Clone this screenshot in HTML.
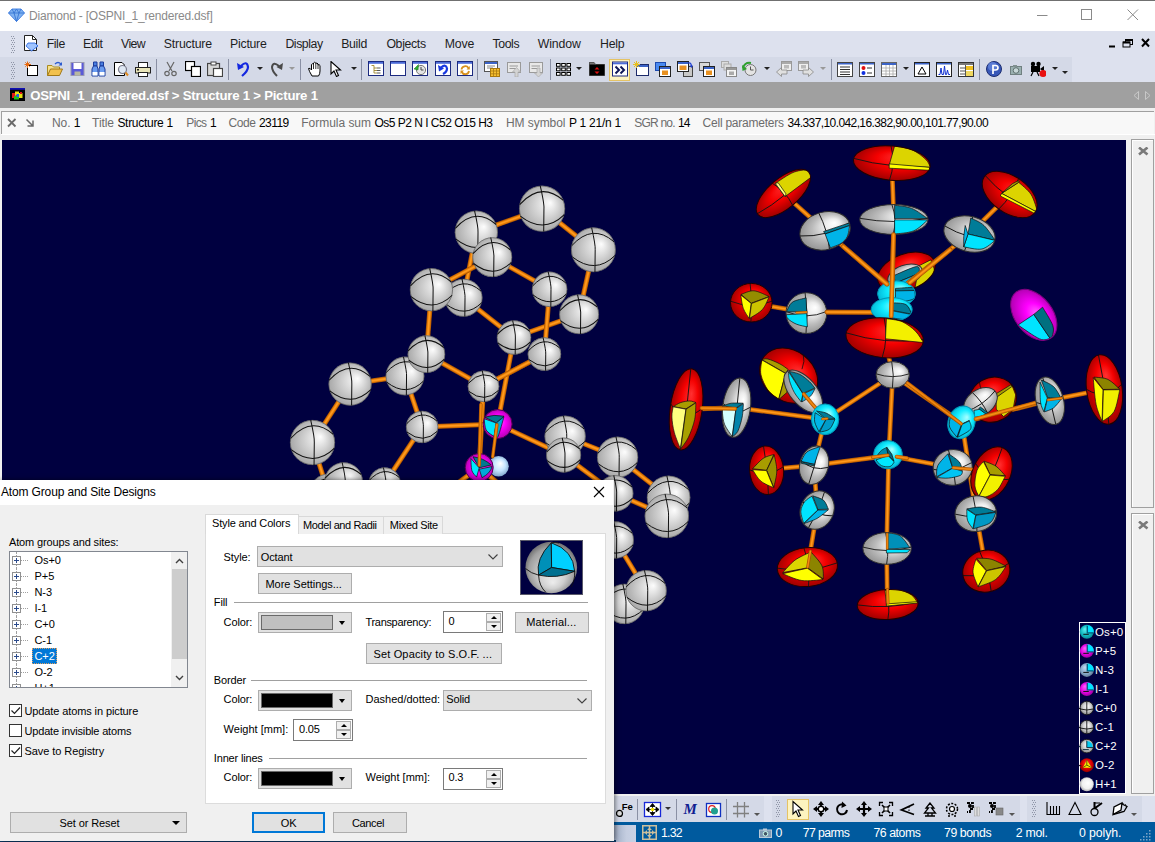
<!DOCTYPE html>
<html><head><meta charset="utf-8">
<style>
*{box-sizing:border-box;margin:0;padding:0}
html,body{width:1155px;height:842px;overflow:hidden;background:#f0f0f0;font-family:"Liberation Sans",sans-serif;font-size:12px;color:#000}
.abs{position:absolute}
#titlebar{left:0;top:0;width:1155px;height:31px;background:#fff;border-top:1px solid #707070}
#menubar{left:0;top:31px;width:1155px;height:51px;background:#dde1ee}
#tabbar{left:0;top:82px;width:1155px;height:26px;background:#a0a0a0}
#pic{left:2px;top:140px;width:1124px;height:654px;background:#000040;overflow:hidden}
#dlg{left:0;top:480px;width:614px;height:361px;background:#f0f0f0;overflow:hidden;box-shadow:1px 0 5px rgba(0,0,0,.55)}
</style></head><body>
<div id="titlebar" class="abs"></div>
<div id="menubar" class="abs"></div>
<div id="tabbar" class="abs"></div>
<svg style="position:absolute;left:8px;top:8px" width="17" height="14" viewBox="0 0 17 14"><path d="M4 1H13L16.5 5L8.5 13.5L0.5 5Z" fill="#7fb2f0"/><path d="M4 1L6 5L8.5 1L11 5L13 1M0.5 5H16.5M6 5L8.5 13.5L11 5" stroke="#2f6fd0" stroke-width=".8" fill="none"/><path d="M4 1H13L16.5 5L8.5 13.5L0.5 5Z" fill="none" stroke="#3b7be0" stroke-width=".9"/></svg>
<svg style="position:absolute;left:1036px;top:9px" width="12" height="12" viewBox="0 0 12 12"><path d="M1 6.5H11.5" stroke="#8a8a8a" stroke-width="1"/></svg>
<svg style="position:absolute;left:1081px;top:9px" width="12" height="12" viewBox="0 0 12 12"><rect x="0.5" y="0.5" width="10" height="10" fill="none" stroke="#8a8a8a" stroke-width="1"/></svg>
<svg style="position:absolute;left:1127px;top:9px" width="12" height="12" viewBox="0 0 12 12"><path d="M0.5 0.5L11 11M11 0.5L0.5 11" stroke="#8a8a8a" stroke-width="1"/></svg>
<div style="position:absolute;left:0px;top:57px;width:1072px;height:25px;background:#d4d9e7"></div>
<svg style="position:absolute;left:11px;top:36px" width="4" height="18" viewBox="0 0 4 18"><g fill="#8e94a6"><rect x="0" y="0" width="1" height="1"/><rect x="2" y="0" width="1" height="1"/><rect x="1" y="2" width="1" height="1"/><rect x="3" y="2" width="1" height="1"/><rect x="0" y="4" width="1" height="1"/><rect x="2" y="4" width="1" height="1"/><rect x="1" y="6" width="1" height="1"/><rect x="3" y="6" width="1" height="1"/><rect x="0" y="8" width="1" height="1"/><rect x="2" y="8" width="1" height="1"/><rect x="1" y="10" width="1" height="1"/><rect x="3" y="10" width="1" height="1"/><rect x="0" y="12" width="1" height="1"/><rect x="2" y="12" width="1" height="1"/><rect x="1" y="14" width="1" height="1"/><rect x="3" y="14" width="1" height="1"/><rect x="0" y="16" width="1" height="1"/><rect x="2" y="16" width="1" height="1"/></g></svg>
<svg style="position:absolute;left:11px;top:62px" width="4" height="18" viewBox="0 0 4 18"><g fill="#8e94a6"><rect x="0" y="0" width="1" height="1"/><rect x="2" y="0" width="1" height="1"/><rect x="1" y="2" width="1" height="1"/><rect x="3" y="2" width="1" height="1"/><rect x="0" y="4" width="1" height="1"/><rect x="2" y="4" width="1" height="1"/><rect x="1" y="6" width="1" height="1"/><rect x="3" y="6" width="1" height="1"/><rect x="0" y="8" width="1" height="1"/><rect x="2" y="8" width="1" height="1"/><rect x="1" y="10" width="1" height="1"/><rect x="3" y="10" width="1" height="1"/><rect x="0" y="12" width="1" height="1"/><rect x="2" y="12" width="1" height="1"/><rect x="1" y="14" width="1" height="1"/><rect x="3" y="14" width="1" height="1"/><rect x="0" y="16" width="1" height="1"/><rect x="2" y="16" width="1" height="1"/></g></svg>
<svg style="position:absolute;left:23px;top:34px" width="16" height="18" viewBox="0 0 16 18"><path d="M1.5 1.5H9.5L13.5 5.5V16.5H1.5Z" fill="#fff" stroke="#222" stroke-width="1"/><path d="M9.5 1.5V5.5H13.5" fill="none" stroke="#222"/><path d="M5 9H12L15 12L8.5 17L3 12Z" fill="#9fc4ff" stroke="#2060e0" stroke-width=".8"/></svg>
<svg style="position:absolute;left:1108px;top:36px" width="44" height="14" viewBox="0 0 44 14"><path d="M1 10.5H7" stroke="#000" stroke-width="2"/><rect x="17.5" y="3.5" width="7" height="5" fill="none" stroke="#000"/><path d="M17.5 4H24.5" stroke="#000" stroke-width="2"/><rect x="15" y="6" width="7" height="5" fill="#dde1ee" stroke="#000"/><path d="M15 6.5H22" stroke="#000" stroke-width="2"/><path d="M34 3L41 10.5M41 3L34 10.5" stroke="#000" stroke-width="2"/></svg>
<svg style="position:absolute;left:24px;top:61px" width="16" height="16" viewBox="0 0 16 16"><rect x="3.5" y="4.5" width="10" height="10" fill="#fff" stroke="#000"/><path d="M3.5 0.5V7M0.5 3.5H7M1.3 1.3L5.7 5.7M5.7 1.3L1.3 5.7" stroke="#e86a10" stroke-width="1"/></svg>
<svg style="position:absolute;left:47px;top:61px" width="16" height="16" viewBox="0 0 16 16"><path d="M0.5 14.5V4.5H5L6.5 6H12.5V8" fill="#f7e08a" stroke="#a88a20"/><path d="M0.5 14.5L3.5 8H15.5L12.5 14.5Z" fill="#f2c14e" stroke="#a07818"/><path d="M8 3Q11 0 14 3" stroke="#2c5cd0" fill="none" stroke-width="1.3"/><path d="M15 1V4.5H11.5Z" fill="#2c5cd0"/></svg>
<svg style="position:absolute;left:70px;top:61px" width="16" height="16" viewBox="0 0 16 16"><rect x="1" y="1.5" width="13" height="13" fill="#5a5ad8" stroke="#9a9ab0"/><rect x="3.5" y="2" width="8" height="6" fill="#fff"/><rect x="4.5" y="10.5" width="6" height="4" fill="#b8b8a0"/></svg>
<svg style="position:absolute;left:91px;top:61px" width="16" height="16" viewBox="0 0 16 16"><path d="M2.5 1H6V5H2.5ZM9 1H12.5V5H9Z" fill="#4a7ee0" stroke="#1c3c9c"/><path d="M1 15V8L2.5 5H6L7 8V15ZM8 15V8L9 5H12.5L14 8V15Z" fill="#6a9cf0" stroke="#1c3c9c"/><rect x="1.5" y="11" width="5" height="3.5" fill="#fff"/><rect x="8.5" y="11" width="5" height="3.5" fill="#fff"/></svg>
<svg style="position:absolute;left:113px;top:61px" width="16" height="16" viewBox="0 0 16 16"><path d="M1.5 1.5H9L11.5 4V14.5H1.5Z" fill="#fff" stroke="#000"/><circle cx="9.5" cy="8.5" r="4" fill="#dfe8f4" stroke="#7a7a8a" stroke-width="1.2"/><path d="M12.5 11.5L15 14.5" stroke="#e08a20" stroke-width="2"/></svg>
<svg style="position:absolute;left:135px;top:61px" width="16" height="16" viewBox="0 0 16 16"><rect x="3.5" y="1.5" width="9" height="5" fill="#fff" stroke="#222"/><rect x="0.5" y="6.5" width="15" height="5.5" fill="#e8e4b8" stroke="#222"/><rect x="3.5" y="11.5" width="9" height="4" fill="#fff" stroke="#222"/><rect x="2" y="8" width="2" height="1.5" fill="#222"/></svg>
<div style="position:absolute;left:156px;top:59px;width:1px;height:21px;background:#8a90a4"></div>
<svg style="position:absolute;left:163px;top:61px" width="16" height="16" viewBox="0 0 16 16"><path d="M4 1L9 10M11 1L6 10" stroke="#666" stroke-width="1.2" fill="none"/><circle cx="4" cy="12.5" r="2.2" fill="none" stroke="#666" stroke-width="1.2"/><circle cx="11" cy="12.5" r="2.2" fill="none" stroke="#666" stroke-width="1.2"/></svg>
<svg style="position:absolute;left:184.5px;top:61px" width="16" height="16" viewBox="0 0 16 16"><rect x="0.5" y="0.5" width="9" height="9" fill="#fff" stroke="#000" stroke-width="1.2"/><rect x="6.5" y="5.5" width="9" height="10" fill="#fff" stroke="#000" stroke-width="1.2"/></svg>
<svg style="position:absolute;left:207px;top:61px" width="16" height="16" viewBox="0 0 16 16"><rect x="0.5" y="2.5" width="12" height="12" fill="#d8d8d8" stroke="#444" stroke-width="1.2"/><rect x="4" y="1" width="5" height="3" fill="#fff" stroke="#444"/><rect x="6.5" y="7.5" width="9" height="8" fill="#fff" stroke="#444" stroke-width="1.2"/></svg>
<div style="position:absolute;left:228px;top:59px;width:1px;height:21px;background:#8a90a4"></div>
<svg style="position:absolute;left:236px;top:61px" width="16" height="16" viewBox="0 0 16 16"><path d="M5 5Q11 -1 12 6Q12 10 6 15" fill="none" stroke="#1428e0" stroke-width="2.2"/><path d="M1 2L2 9L8 6Z" fill="#1428e0"/></svg>
<div style="position:absolute;left:256.5px;top:67px;border:3px solid transparent;border-top:3.500px solid #222;border-bottom:none"></div>
<svg style="position:absolute;left:269px;top:61px" width="16" height="16" viewBox="0 0 16 16"><path d="M10 5Q4 0 3 6Q3 10 8 15" fill="none" stroke="#4a4a4a" stroke-width="2"/><path d="M14 2L13 9L7.5 6Z" fill="#4a4a4a"/></svg>
<div style="position:absolute;left:289px;top:67px;border:3px solid transparent;border-top:3.500px solid #999;border-bottom:none"></div>
<div style="position:absolute;left:300px;top:59px;width:1px;height:21px;background:#8a90a4"></div>
<svg style="position:absolute;left:308px;top:61px" width="16" height="16" viewBox="0 0 16 16"><path d="M4 15Q1 10 0.5 7.5Q2 6.5 3.5 9V3.5Q4.5 2 5.5 3.5V2Q6.5 0.5 7.8 2V2.5Q9 1.2 10 3V4Q11.2 3 12 4.5V10Q12 13 10.5 15Z" fill="#fff" stroke="#000" stroke-width="1"/><path d="M5.5 3.5V8M7.8 2.5V8M10 3.5V8" stroke="#000" stroke-width=".8"/></svg>
<svg style="position:absolute;left:330px;top:61px" width="16" height="16" viewBox="0 0 16 16"><path d="M1 0.5V13L4 10L6.5 15.5L8.5 14.5L6 9H10.5Z" fill="#fff" stroke="#000" stroke-width="1.1"/></svg>
<div style="position:absolute;left:351px;top:67px;border:3px solid transparent;border-top:3.500px solid #222;border-bottom:none"></div>
<div style="position:absolute;left:361px;top:59px;width:1px;height:21px;background:#8a90a4"></div>
<svg style="position:absolute;left:367.5px;top:61px" width="16" height="15" viewBox="0 0 16 15"><rect x=".5" y=".5" width="15" height="14" fill="#fff" stroke="#1c2a80"/><rect x="1" y="1" width="14" height="1.800" fill="#4c6cd8"/><path d="M3.500 4.500H6V12M6 7H9M6 9.500H9M6 12H9" stroke="#a08830" fill="none" stroke-width=".9"/><path d="M9 7H12.500M9 9.500H12.500M9 12H12.500" stroke="#444" stroke-width=".9"/></svg>
<svg style="position:absolute;left:390px;top:61px" width="16" height="15" viewBox="0 0 16 15"><rect x=".5" y=".5" width="15" height="14" fill="#fff" stroke="#1c2a80"/><rect x="1" y="1" width="14" height="1.800" fill="#4c6cd8"/></svg>
<svg style="position:absolute;left:412px;top:61px" width="16" height="15" viewBox="0 0 16 15"><rect x=".5" y=".5" width="15" height="14" fill="#fff" stroke="#1c2a80"/><rect x="1" y="1" width="14" height="1.800" fill="#4c6cd8"/><circle cx="9" cy="9" r="4.600" fill="#e4e4e4" stroke="#777"/><path d="M9 6V9H11.500" stroke="#444" fill="none"/><path d="M2 8L6.500 3.500L6 9Z" fill="#30b030" stroke="#187018" stroke-width=".5"/></svg>
<svg style="position:absolute;left:434.5px;top:61px" width="16" height="15" viewBox="0 0 16 15"><rect x=".5" y=".5" width="15" height="14" fill="#fff" stroke="#1c2a80"/><rect x="1" y="1" width="14" height="1.800" fill="#4c6cd8"/><path d="M6 6.500Q11 2.500 12 7.500Q12 11 8 13" fill="none" stroke="#1838e0" stroke-width="2.200"/><path d="M3 4L4 10.500L9 7.500Z" fill="#1838e0"/></svg>
<svg style="position:absolute;left:456.5px;top:61px" width="16" height="15" viewBox="0 0 16 15"><rect x=".5" y=".5" width="15" height="14" fill="#fff" stroke="#1c2a80"/><rect x="1" y="1" width="14" height="1.800" fill="#4c6cd8"/><path d="M4.500 8.500A3.800 3.800 0 0 1 11.500 7M12 10A3.800 3.800 0 0 1 4.800 11" fill="none" stroke="#d8901c" stroke-width="1.800"/><path d="M12.800 5V8.500H9.500ZM3.500 13V9.500H7Z" fill="#d8901c"/></svg>
<div style="position:absolute;left:477px;top:59px;width:1px;height:21px;background:#8a90a4"></div>
<svg style="position:absolute;left:483.5px;top:61px" width="16" height="16" viewBox="0 0 16 16"><rect x=".5" y=".5" width="13" height="10" fill="#fff" stroke="#555"/><rect x="1" y="1" width="12" height="2" fill="#3c64c8"/><path d="M3 5H11M3 7H9" stroke="#888"/><rect x="6.500" y="7.5" width="9" height="8" fill="#f8c030" stroke="#a87810"/><path d="M6.5 10H15.5M6.5 12.8H15.500M9.5 7.5V15.5M12.5 7.5V15.5" stroke="#a87810" stroke-width=".8"/></svg>
<svg style="position:absolute;left:505.5px;top:61px" width="16" height="16" viewBox="0 0 16 16"><rect x="1.500" y="1.500" width="13" height="10" fill="#e8e8e8" stroke="#9a9a9a"/><path d="M3.5 5H12M3.5 7.500H10" stroke="#9a9a9a"/><path d="M9 16V11H6.5L10.5 6.500L14.5 11H12V16Z" fill="#d4d4d4" stroke="#aaa" stroke-width=".7"/></svg>
<svg style="position:absolute;left:527.5px;top:61px" width="16" height="16" viewBox="0 0 16 16"><rect x="1.500" y="1.500" width="13" height="10" fill="#e8e8e8" stroke="#9a9a9a"/><path d="M3.5 5H12M3.5 7.500H10" stroke="#9a9a9a"/><path d="M9 7V12H6.500L10.5 16L14.5 12H12V7Z" fill="#d4d4d4" stroke="#aaa" stroke-width=".7"/></svg>
<div style="position:absolute;left:550px;top:59px;width:1px;height:21px;background:#8a90a4"></div>
<svg style="position:absolute;left:555.5px;top:61px" width="16" height="16" viewBox="0 0 16 16"><rect x="0.5" y="2.5" width="3.600" height="2.800" fill="#fff" stroke="#000" stroke-width="1"/><rect x="0.5" y="7" width="3.600" height="2.800" fill="#fff" stroke="#000" stroke-width="1"/><rect x="0.5" y="11.5" width="3.600" height="2.800" fill="#fff" stroke="#000" stroke-width="1"/><rect x="5.7" y="2.5" width="3.600" height="2.800" fill="#fff" stroke="#000" stroke-width="1"/><rect x="5.7" y="7" width="3.600" height="2.800" fill="#fff" stroke="#000" stroke-width="1"/><rect x="5.7" y="11.5" width="3.600" height="2.800" fill="#fff" stroke="#000" stroke-width="1"/><rect x="10.9" y="2.5" width="3.600" height="2.800" fill="#fff" stroke="#000" stroke-width="1"/><rect x="10.9" y="7" width="3.600" height="2.800" fill="#fff" stroke="#000" stroke-width="1"/><rect x="10.9" y="11.5" width="3.600" height="2.800" fill="#fff" stroke="#000" stroke-width="1"/></svg>
<div style="position:absolute;left:575.5px;top:67px;border:3px solid transparent;border-top:3.500px solid #222;border-bottom:none"></div>
<svg style="position:absolute;left:588.5px;top:61px" width="16" height="16" viewBox="0 0 16 16"><path d="M0.500 14.500V1.500H5L6.500 3.500H15.500V14.500Z" fill="#000" stroke="#333"/><path d="M0.5 1.5H5L6.5 3.500H0.500Z" fill="#777"/><path d="M8 6L5.500 8.500H10.500ZM8 13L5.500 10.500H10.500Z" fill="#e01010"/></svg>
<div style="position:absolute;left:608.5px;top:59px;width:21.5px;height:22px;background:#fdf3c0;border:1px solid #e5c365"></div>
<svg style="position:absolute;left:611.5px;top:61px" width="16" height="16" viewBox="0 0 16 16"><rect x=".5" y="1" width="15" height="14" fill="#fff" stroke="#1c2a80"/><rect x="1" y="1.500" width="14" height="1.800" fill="#4c6cd8"/><path d="M3.500 5.500L7 9L3.500 12.500M8.500 5.500L12 9L8.500 12.500" fill="none" stroke="#101858" stroke-width="2"/></svg>
<svg style="position:absolute;left:633px;top:61px" width="16" height="16" viewBox="0 0 16 16"><rect x="3.500" y="3.500" width="12" height="11" fill="#fff" stroke="#1c2a6a"/><rect x="4" y="4" width="11" height="2" fill="#3c64c8"/><path d="M3.500 0V7M0 3.500H7M1 1L6 6M6 1L1 6" stroke="#e8c020" stroke-width="1"/></svg>
<svg style="position:absolute;left:655px;top:61px" width="16" height="16" viewBox="0 0 16 16"><rect x=".5" y="1.500" width="10" height="8" fill="#4a8af0" stroke="#1c4ab0"/><rect x="4.500" y="5.500" width="11" height="10" fill="#fff" stroke="#222"/><rect x="5" y="6" width="10" height="2" fill="#3c64c8"/><rect x="7" y="9.500" width="6" height="4.500" fill="#e89020"/></svg>
<svg style="position:absolute;left:677px;top:61px" width="16" height="16" viewBox="0 0 16 16"><rect x="6.500" y="5.500" width="9" height="10" fill="#c8c8c8" stroke="#444"/><rect x=".5" y=".5" width="11" height="10" fill="#fff" stroke="#222"/><rect x="1" y="1" width="10" height="2" fill="#3c64c8"/><rect x="2.500" y="4.500" width="7" height="4.500" fill="#e89020"/><path d="M11 2Q14 1 14.500 5" stroke="#2040d0" fill="none" stroke-width="1.2"/><path d="M12.5 4.500H16L14.500 7Z" fill="#2040d0"/></svg>
<svg style="position:absolute;left:698.5px;top:61px" width="16" height="16" viewBox="0 0 16 16"><rect x=".5" y="1.500" width="10" height="8" fill="#d8d8d8" stroke="#555"/><rect x="4.500" y="5.500" width="11" height="10" fill="#fff" stroke="#222"/><rect x="5" y="6" width="10" height="2" fill="#3c64c8"/><rect x="7" y="9.500" width="6" height="4.500" fill="#e89020"/></svg>
<svg style="position:absolute;left:720.5px;top:61px" width="16" height="16" viewBox="0 0 16 16"><rect x=".5" y=".5" width="7" height="6" fill="#ddd" stroke="#aaa"/><rect x="3" y="3" width="7" height="6" fill="#ddd" stroke="#aaa"/><rect x="5.500" y="6.500" width="10" height="9" fill="#f4f4f4" stroke="#888"/><rect x="6" y="7" width="9" height="2" fill="#999"/><rect x="8" y="10.500" width="5" height="3.500" fill="#aaa"/></svg>
<svg style="position:absolute;left:742px;top:61px" width="16" height="16" viewBox="0 0 16 16"><circle cx="8.500" cy="9" r="5.500" fill="#e4e4e4" stroke="#777"/><path d="M8.500 5.500V9H11.500" stroke="#555" fill="none"/><path d="M1 7Q3 1 9 2" fill="none" stroke="#30a030" stroke-width="2"/><path d="M0 4L5 8L0.500 10Z" fill="#30a030"/></svg>
<div style="position:absolute;left:764px;top:67px;border:3px solid transparent;border-top:3.500px solid #222;border-bottom:none"></div>
<svg style="position:absolute;left:776px;top:61px" width="16" height="16" viewBox="0 0 16 16"><rect x="5.500" y=".5" width="10" height="9" fill="#eee" stroke="#999"/><rect x="6" y="1" width="9" height="2" fill="#aaa"/><rect x="8" y="4" width="5" height="3.500" fill="#bbb"/><path d="M0.500 11L5.500 6.500V9H11V13H5.500V15.500Z" fill="#e0e0e0" stroke="#888" stroke-width=".8"/></svg>
<svg style="position:absolute;left:798px;top:61px" width="16" height="16" viewBox="0 0 16 16"><rect x=".5" y=".5" width="10" height="9" fill="#eee" stroke="#999"/><rect x="1" y="1" width="9" height="2" fill="#aaa"/><rect x="3" y="4" width="5" height="3.500" fill="#bbb"/><path d="M15.500 11L10.500 6.500V9H5V13H10.500V15.500Z" fill="#e0e0e0" stroke="#888" stroke-width=".8"/></svg>
<div style="position:absolute;left:819.5px;top:67px;border:3px solid transparent;border-top:3.500px solid #999;border-bottom:none"></div>
<div style="position:absolute;left:831px;top:59px;width:1px;height:21px;background:#8a90a4"></div>
<svg style="position:absolute;left:836.5px;top:62px" width="16" height="15" viewBox="0 0 16 15"><rect x=".5" y=".5" width="15" height="14" fill="#fff" stroke="#444"/><rect x="1" y="1" width="14" height="1.500" fill="#3c64c8"/><path d="M3 5H13M3 7.500H13M3 10H13M3 12.500H13" stroke="#333"/></svg>
<svg style="position:absolute;left:859px;top:62px" width="16" height="15" viewBox="0 0 16 15"><rect x=".5" y=".5" width="15" height="14" fill="#fff" stroke="#444"/><rect x="1" y="1" width="14" height="1.500" fill="#3c64c8"/><circle cx="4.500" cy="6" r="2" fill="#e01010"/><circle cx="4.500" cy="11" r="2" fill="#1030e0"/><path d="M8 6H13M8 11H13" stroke="#333"/></svg>
<svg style="position:absolute;left:881px;top:62px" width="16" height="15" viewBox="0 0 16 15"><rect x=".5" y=".5" width="15" height="14" fill="#fff" stroke="#666"/><rect x="1" y="1" width="14" height="2" fill="#3c64c8"/><path d="M1 6H15M1 9H15M1 12H15M5 3V14M8.500 3V14M12 3V14" stroke="#aaa" stroke-width=".8"/></svg>
<div style="position:absolute;left:902.5px;top:67px;border:3px solid transparent;border-top:3.500px solid #222;border-bottom:none"></div>
<svg style="position:absolute;left:914px;top:62px" width="16" height="15" viewBox="0 0 16 15"><rect x=".5" y=".5" width="15" height="14" fill="#fff" stroke="#222"/><rect x="1" y="1" width="14" height="1.500" fill="#3c64c8"/><path d="M8 5L4 12H12Z" fill="none" stroke="#000"/></svg>
<svg style="position:absolute;left:936px;top:62px" width="16" height="15" viewBox="0 0 16 15"><rect x=".5" y=".5" width="15" height="14" fill="#fff" stroke="#222"/><rect x="1" y="1" width="14" height="1.500" fill="#3c64c8"/><path d="M2.500 12.500H4L5 6L6 12.500H7.500L8.500 4L9.500 12.500H10.500L11.500 8L12.500 12.500H14" fill="none" stroke="#1030d0"/></svg>
<svg style="position:absolute;left:957.5px;top:62px" width="16" height="15" viewBox="0 0 16 15"><rect x=".5" y=".5" width="15" height="14" fill="#fff" stroke="#333"/><rect x="1" y="1" width="14" height="2" fill="#777"/><rect x="8" y="4" width="7" height="4" fill="#f0c020"/><rect x="8" y="9" width="7" height="5" fill="#f0d860"/><path d="M2 6H7M2 9H7M2 12H7M7.500 3V14" stroke="#555"/></svg>
<div style="position:absolute;left:979px;top:59px;width:1px;height:21px;background:#8a90a4"></div>
<svg style="position:absolute;left:986px;top:61px" width="16" height="16" viewBox="0 0 16 16"><circle cx="8" cy="8" r="7.500" fill="#3858b8" stroke="#1c2c70"/><circle cx="6.500" cy="5.500" r="4.500" fill="#6a8ae0" opacity=".7"/><path d="M7 13V4.500H9.500Q12 4.500 12 6.800Q12 9 9.500 9H7" fill="none" stroke="#fff" stroke-width="1.700"/></svg>
<svg style="position:absolute;left:1010px;top:63px" width="16" height="16" viewBox="0 0 16 16"><rect x=".5" y="3.500" width="11" height="8" fill="#9ab0b0" stroke="#708080"/><circle cx="6" cy="7.500" r="2.800" fill="#c8d8d8" stroke="#607070"/><rect x="3" y="2" width="4" height="2" fill="#809090"/></svg>
<svg style="position:absolute;left:1029.5px;top:61px" width="16" height="16" viewBox="0 0 16 16"><circle cx="3" cy="3" r="2.200" fill="#000"/><circle cx="8.500" cy="3" r="2.200" fill="#000"/><rect x="1" y="5" width="9" height="6" fill="#000"/><path d="M10 8L14 5V11Z" fill="#000"/><path d="M3 11L1 15M7 11L9 15" stroke="#000" stroke-width="1.200"/><circle cx="13" cy="12.500" r="3.500" fill="#e81010"/></svg>
<div style="position:absolute;left:1051.5px;top:67px;border:3px solid transparent;border-top:3.500px solid #222;border-bottom:none"></div>
<div style="position:absolute;left:1061.5px;top:71px;border:3px solid transparent;border-top:3.500px solid #222;border-bottom:none"></div>
<svg style="position:absolute;left:10px;top:88px" width="15" height="13" viewBox="0 0 15 13"><rect x="0" y="0" width="15" height="13" fill="#000"/><rect x="0" y="0" width="15" height="1.800" fill="#1010b0"/><rect x="2" y="5" width="4" height="5" fill="#e01818"/><rect x="5" y="3.500" width="4" height="4" fill="#e8e010"/><rect x="8" y="5" width="4.500" height="5" fill="#e8e010"/><rect x="4" y="8" width="5" height="3.500" fill="#18c018"/><rect x="6.500" y="6" width="2.500" height="3" fill="#2060f0"/><rect x="10" y="4" width="2" height="2" fill="#e01818"/></svg>
<svg style="position:absolute;left:1133px;top:90px" width="18" height="12" viewBox="0 0 18 12"><path d="M5.500 1.500V9.500L1 5.500Z M12.500 1.500V9.500L17 5.500Z" fill="none" stroke="#c8c8c8" stroke-width="1"/></svg>
<div style="position:absolute;left:1px;top:111px;width:1153px;height:23px;background:#f8f8f8;border-top:1px solid #a0a0a0;border-left:1px solid #a0a0a0"></div>
<div style="position:absolute;left:1px;top:134px;width:1154px;height:1px;background:#fff"></div>
<svg style="position:absolute;left:7px;top:118px" width="28" height="10" viewBox="0 0 28 10"><path d="M1 1L8.500 8.500M8.500 1L1 8.500" stroke="#6a6a6a" stroke-width="1.800"/><path d="M19.500 1.500L25.500 7.500M26 2.500V8H20.500" fill="none" stroke="#6a6a6a" stroke-width="1.500"/></svg>
<div style="position:absolute;left:1126px;top:136px;width:29px;height:660px;background:#f0f0f0"></div>
<div style="position:absolute;left:1131px;top:139px;width:23px;height:369px;background:#f0f0f0;border:1px solid #a0a0a0;box-shadow:inset 1px 1px 0 #fff"></div>
<div style="position:absolute;left:1131px;top:513px;width:23px;height:281px;background:#f0f0f0;border:1px solid #a0a0a0;box-shadow:inset 1px 1px 0 #fff"></div>
<svg style="position:absolute;left:1138px;top:147px" width="11" height="9" viewBox="0 0 11 9"><path d="M1 0.500L9.500 7.500M9.500 0.500L1 7.500" stroke="#7a7a7a" stroke-width="2.600"/></svg>
<svg style="position:absolute;left:1138px;top:520.5px" width="11" height="9" viewBox="0 0 11 9"><path d="M1 0.500L9.500 7.500M9.500 0.500L1 7.500" stroke="#7a7a7a" stroke-width="2.600"/></svg>
<div style="position:absolute;left:0px;top:794px;width:1155px;height:2px;background:#f0f0f0"></div>
<div style="position:absolute;left:0px;top:796px;width:1155px;height:26px;background:#dde1ee"></div>
<div style="position:absolute;left:0px;top:796px;width:1142px;height:26px;background:#d4d9e7"></div>
<div style="position:absolute;left:0px;top:821.5px;width:1155px;height:20.5px;background:#005a9e"></div>
<div style="position:absolute;left:612px;top:825px;width:24px;height:17px;background:linear-gradient(90deg,#9aa8c0,#c4cde0 60%,#c9d1e4)"></div>
<svg style="position:absolute;left:642px;top:825px" width="16" height="16" viewBox="0 0 16 16"><rect x=".75" y=".75" width="13.5" height="13.5" fill="none" stroke="#cdbf9c" stroke-width="1.500"/><path d="M7.500 1V14M1 7.500H14" stroke="#cdbf9c" stroke-width="1.500"/><path d="M7.500 2.500L5 5H10ZM7.500 12.500L5 10H10ZM2.500 7.500L5 5V10ZM12.500 7.500L10 5V10Z" fill="#cdbf9c"/></svg>
<svg style="position:absolute;left:759px;top:828px" width="14" height="10" viewBox="0 0 14 10"><rect x=".5" y="2" width="12" height="7.500" fill="#7f9ab4" stroke="#b9c9d8"/><circle cx="6.500" cy="5.800" r="2.300" fill="#456" stroke="#cfe"/><rect x="4" y=".5" width="4" height="2" fill="#b9c9d8"/></svg>
<svg style="position:absolute;left:1140px;top:830px" width="12" height="11" viewBox="0 0 12 11"><g fill="#7fa6c8"><rect x="9" y="0" width="1.500" height="1.500"/><rect x="6" y="3" width="1.500" height="1.500"/><rect x="9" y="3" width="1.500" height="1.500"/><rect x="3" y="6" width="1.500" height="1.500"/><rect x="6" y="6" width="1.500" height="1.500"/><rect x="9" y="6" width="1.500" height="1.500"/><rect x="0" y="9" width="1.500" height="1.500"/><rect x="3" y="9" width="1.500" height="1.500"/><rect x="6" y="9" width="1.500" height="1.500"/><rect x="9" y="9" width="1.500" height="1.500"/></g></svg>
<span style="position:absolute;left:29.1px;top:9px;font-size:12px;line-height:14px;font-weight:normal;color:#8a8a8a;white-space:pre;letter-spacing:-0.207px">Diamond - [OSPNI_1_rendered.dsf]</span>
<span style="position:absolute;left:46.7px;top:36.5px;font-size:12.3px;line-height:14px;font-weight:normal;color:#1e1e1e;white-space:pre;letter-spacing:-0.409px">File</span>
<span style="position:absolute;left:82.9px;top:36.5px;font-size:12.3px;line-height:14px;font-weight:normal;color:#1e1e1e;white-space:pre;letter-spacing:-0.368px">Edit</span>
<span style="position:absolute;left:121.1px;top:36.5px;font-size:12.3px;line-height:14px;font-weight:normal;color:#1e1e1e;white-space:pre;letter-spacing:-0.613px">View</span>
<span style="position:absolute;left:163.8px;top:36.5px;font-size:12.3px;line-height:14px;font-weight:normal;color:#1e1e1e;white-space:pre;letter-spacing:-0.211px">Structure</span>
<span style="position:absolute;left:230.1px;top:36.5px;font-size:12.3px;line-height:14px;font-weight:normal;color:#1e1e1e;white-space:pre;letter-spacing:-0.264px">Picture</span>
<span style="position:absolute;left:285.4px;top:36.5px;font-size:12.3px;line-height:14px;font-weight:normal;color:#1e1e1e;white-space:pre;letter-spacing:-0.438px">Display</span>
<span style="position:absolute;left:341.2px;top:36.5px;font-size:12.3px;line-height:14px;font-weight:normal;color:#1e1e1e;white-space:pre;letter-spacing:-0.315px">Build</span>
<span style="position:absolute;left:386.4px;top:36.5px;font-size:12.3px;line-height:14px;font-weight:normal;color:#1e1e1e;white-space:pre;letter-spacing:-0.334px">Objects</span>
<span style="position:absolute;left:444.7px;top:36.5px;font-size:12.3px;line-height:14px;font-weight:normal;color:#1e1e1e;white-space:pre;letter-spacing:-0.126px">Move</span>
<span style="position:absolute;left:492.5px;top:36.5px;font-size:12.3px;line-height:14px;font-weight:normal;color:#1e1e1e;white-space:pre;letter-spacing:-0.405px">Tools</span>
<span style="position:absolute;left:537.7px;top:36.5px;font-size:12.3px;line-height:14px;font-weight:normal;color:#1e1e1e;white-space:pre;letter-spacing:-0.090px">Window</span>
<span style="position:absolute;left:600.1px;top:36.5px;font-size:12.3px;line-height:14px;font-weight:normal;color:#1e1e1e;white-space:pre;letter-spacing:-0.232px">Help</span>
<span style="position:absolute;left:30.2px;top:87.5px;font-size:13.2px;line-height:15px;font-weight:bold;color:#fff;white-space:pre;letter-spacing:-0.234px">OSPNI_1_rendered.dsf &gt; Structure 1 &gt; Picture 1</span>
<span style="position:absolute;left:52px;top:115.5px;font-size:12px;line-height:14px;font-weight:normal;color:#6c6c6c;white-space:pre;letter-spacing:-0.094px">No.</span>
<span style="position:absolute;left:73.8px;top:115.5px;font-size:12px;line-height:14px;font-weight:normal;color:#000;white-space:pre;letter-spacing:0.000px">1</span>
<span style="position:absolute;left:92.1px;top:115.5px;font-size:12px;line-height:14px;font-weight:normal;color:#6c6c6c;white-space:pre;letter-spacing:-0.084px">Title</span>
<span style="position:absolute;left:117.4px;top:115.5px;font-size:12px;line-height:14px;font-weight:normal;color:#000;white-space:pre;letter-spacing:-0.290px">Structure 1</span>
<span style="position:absolute;left:186.3px;top:115.5px;font-size:12px;line-height:14px;font-weight:normal;color:#6c6c6c;white-space:pre;letter-spacing:-0.657px">Pics</span>
<span style="position:absolute;left:209.9px;top:115.5px;font-size:12px;line-height:14px;font-weight:normal;color:#000;white-space:pre;letter-spacing:0.000px">1</span>
<span style="position:absolute;left:228.6px;top:115.5px;font-size:12px;line-height:14px;font-weight:normal;color:#6c6c6c;white-space:pre;letter-spacing:-0.429px">Code</span>
<span style="position:absolute;left:259px;top:115.5px;font-size:12px;line-height:14px;font-weight:normal;color:#000;white-space:pre;letter-spacing:-0.571px">23119</span>
<span style="position:absolute;left:301.3px;top:115.5px;font-size:12px;line-height:14px;font-weight:normal;color:#6c6c6c;white-space:pre;letter-spacing:-0.032px">Formula sum</span>
<span style="position:absolute;left:374.4px;top:115.5px;font-size:12px;line-height:14px;font-weight:normal;color:#000;white-space:pre;letter-spacing:-0.507px">Os5 P2 N I C52 O15 H3</span>
<span style="position:absolute;left:506px;top:115.5px;font-size:12px;line-height:14px;font-weight:normal;color:#6c6c6c;white-space:pre;letter-spacing:-0.064px">HM symbol</span>
<span style="position:absolute;left:569px;top:115.5px;font-size:12px;line-height:14px;font-weight:normal;color:#000;white-space:pre;letter-spacing:-0.256px">P 1 21/n 1</span>
<span style="position:absolute;left:634.3px;top:115.5px;font-size:12px;line-height:14px;font-weight:normal;color:#6c6c6c;white-space:pre;letter-spacing:-0.800px">SGR no.</span>
<span style="position:absolute;left:678px;top:115.5px;font-size:12px;line-height:14px;font-weight:normal;color:#000;white-space:pre;letter-spacing:-0.800px">14</span>
<span style="position:absolute;left:702.6px;top:115.5px;font-size:12px;line-height:14px;font-weight:normal;color:#6c6c6c;white-space:pre;letter-spacing:-0.236px">Cell parameters</span>
<span style="position:absolute;left:787.6px;top:115.5px;font-size:12px;line-height:14px;font-weight:normal;color:#000;white-space:pre;letter-spacing:-0.593px">34.337,10.042,16.382,90.00,101.77,90.00</span>
<span style="position:absolute;left:661px;top:825.5px;font-size:12.3px;line-height:14px;font-weight:normal;color:#fff;white-space:pre;letter-spacing:-0.800px">1.32</span>
<span style="position:absolute;left:775.4px;top:825.5px;font-size:12.3px;line-height:14px;font-weight:normal;color:#fff;white-space:pre;letter-spacing:0.000px">0</span>
<span style="position:absolute;left:802.8px;top:825.5px;font-size:12.3px;line-height:14px;font-weight:normal;color:#fff;white-space:pre;letter-spacing:-0.595px">77 parms</span>
<span style="position:absolute;left:873.4px;top:825.5px;font-size:12.3px;line-height:14px;font-weight:normal;color:#fff;white-space:pre;letter-spacing:-0.428px">76 atoms</span>
<span style="position:absolute;left:944px;top:825.5px;font-size:12.3px;line-height:14px;font-weight:normal;color:#fff;white-space:pre;letter-spacing:-0.430px">79 bonds</span>
<span style="position:absolute;left:1015.7px;top:825.5px;font-size:12.3px;line-height:14px;font-weight:normal;color:#fff;white-space:pre;letter-spacing:-0.260px">2 mol.</span>
<span style="position:absolute;left:1079px;top:825.5px;font-size:12.3px;line-height:14px;font-weight:normal;color:#fff;white-space:pre;letter-spacing:-0.097px">0 polyh.</span>
<div id="pic" class="abs">
<svg width="1124" height="654" viewBox="2 140 1124 654" style="position:absolute;left:0;top:0"><defs><radialGradient id="gGray" cx=".5" cy=".5" r=".6" fx=".68" fy=".37"><stop offset="0" stop-color="#fdfdfd"/><stop offset=".22" stop-color="#e8e8e8"/><stop offset=".55" stop-color="#c8c8c8"/><stop offset=".85" stop-color="#aaaaaa"/><stop offset="1" stop-color="#727272"/></radialGradient>
<radialGradient id="gGrayE" cx=".5" cy=".5" r=".62" fx=".72" fy=".36"><stop offset="0" stop-color="#fff"/><stop offset=".25" stop-color="#ececec"/><stop offset=".55" stop-color="#bcbcbc"/><stop offset=".85" stop-color="#969696"/><stop offset="1" stop-color="#7a7a7a"/></radialGradient>
<radialGradient id="gRed" cx=".5" cy=".5" r=".58" fx=".6" fy=".3"><stop offset="0" stop-color="#ff3030"/><stop offset=".45" stop-color="#f40000"/><stop offset="1" stop-color="#8c0000"/></radialGradient>
<radialGradient id="gCyan" cx=".5" cy=".5" r=".6" fx=".64" fy=".3"><stop offset="0" stop-color="#a8ffff"/><stop offset=".5" stop-color="#10ecff"/><stop offset="1" stop-color="#00a8cc"/></radialGradient>
<radialGradient id="gMag" cx=".5" cy=".5" r=".58" fx=".55" fy=".4"><stop offset="0" stop-color="#ff70ff"/><stop offset=".4" stop-color="#ff00ff"/><stop offset="1" stop-color="#a000a0"/></radialGradient>
<radialGradient id="gPale" cx=".5" cy=".5" r=".58" fx=".6" fy=".35"><stop offset="0" stop-color="#fff"/><stop offset=".5" stop-color="#c4e4ff"/><stop offset="1" stop-color="#7098c0"/></radialGradient><clipPath id="c1"><ellipse cx="497.6" cy="424.1" rx="14.5" ry="14.5" transform="rotate(0 497.6 424.1)"/></clipPath><clipPath id="c2"><ellipse cx="479.2" cy="467.5" rx="14" ry="14" transform="rotate(0 479.2 467.5)"/></clipPath><clipPath id="c3"><ellipse cx="906.4" cy="271.9" rx="30" ry="18" transform="rotate(-20 906.4 271.9)"/></clipPath><clipPath id="c4"><ellipse cx="905" cy="275.1" rx="18" ry="9.9" transform="rotate(-20 905 275.1)"/></clipPath><clipPath id="c5"><ellipse cx="891.8" cy="163.1" rx="38.5" ry="17.1" transform="rotate(5 891.8 163.1)"/></clipPath><clipPath id="c6"><ellipse cx="893.9" cy="219.5" rx="34.2" ry="15" transform="rotate(0 893.9 219.5)"/></clipPath><clipPath id="c7"><ellipse cx="783.4" cy="193.4" rx="33.1" ry="15" transform="rotate(-40 783.4 193.4)"/></clipPath><clipPath id="c8"><ellipse cx="825.1" cy="230.8" rx="25.6" ry="18.8" transform="rotate(-15 825.1 230.8)"/></clipPath><clipPath id="c9"><ellipse cx="969.5" cy="234" rx="26.1" ry="17.5" transform="rotate(15 969.5 234)"/></clipPath><clipPath id="c10"><ellipse cx="1009.7" cy="194.5" rx="31" ry="18.2" transform="rotate(35 1009.7 194.5)"/></clipPath><clipPath id="c11"><ellipse cx="1033.8" cy="314.9" rx="28.9" ry="18.7" transform="rotate(52 1033.8 314.9)"/></clipPath><clipPath id="c12"><ellipse cx="751.3" cy="302.7" rx="20.8" ry="19.3" transform="rotate(0 751.3 302.7)"/></clipPath><clipPath id="c13"><ellipse cx="806.4" cy="313.1" rx="20.4" ry="20.4" transform="rotate(0 806.4 313.1)"/></clipPath><clipPath id="c14"><ellipse cx="896.5" cy="293.7" rx="19" ry="12.9" transform="rotate(0 896.5 293.7)"/></clipPath><clipPath id="c15"><ellipse cx="891.7" cy="309.4" rx="20.5" ry="11.8" transform="rotate(0 891.7 309.4)"/></clipPath><clipPath id="c16"><ellipse cx="884.7" cy="337.8" rx="38.9" ry="19.9" transform="rotate(5 884.7 337.8)"/></clipPath><clipPath id="c17"><ellipse cx="892.7" cy="374.9" rx="16.7" ry="13.3" transform="rotate(0 892.7 374.9)"/></clipPath><clipPath id="c18"><ellipse cx="686.1" cy="409.3" rx="16" ry="41" transform="rotate(8 686.1 409.3)"/></clipPath><clipPath id="c19"><ellipse cx="736.5" cy="407.6" rx="13.9" ry="29.9" transform="rotate(8 736.5 407.6)"/></clipPath><clipPath id="c20"><ellipse cx="788.6" cy="375.6" rx="31.1" ry="25.2" transform="rotate(38 788.6 375.6)"/></clipPath><clipPath id="c21"><ellipse cx="803.2" cy="391.3" rx="25.5" ry="13.3" transform="rotate(50 803.2 391.3)"/></clipPath><clipPath id="c22"><ellipse cx="825.1" cy="419.3" rx="13.7" ry="15.4" transform="rotate(0 825.1 419.3)"/></clipPath><clipPath id="c23"><ellipse cx="766.6" cy="470.3" rx="17" ry="24.3" transform="rotate(-5 766.6 470.3)"/></clipPath><clipPath id="c24"><ellipse cx="814.1" cy="465.2" rx="14.3" ry="19.6" transform="rotate(15 814.1 465.2)"/></clipPath><clipPath id="c25"><ellipse cx="888" cy="454.7" rx="14.4" ry="14.1" transform="rotate(0 888 454.7)"/></clipPath><clipPath id="c26"><ellipse cx="992.7" cy="399.7" rx="24.3" ry="22" transform="rotate(-30 992.7 399.7)"/></clipPath><clipPath id="c27"><ellipse cx="980.5" cy="402.3" rx="18.4" ry="12.8" transform="rotate(-35 980.5 402.3)"/></clipPath><clipPath id="c28"><ellipse cx="961.5" cy="422.3" rx="13.4" ry="16.6" transform="rotate(18 961.5 422.3)"/></clipPath><clipPath id="c29"><ellipse cx="1049.8" cy="400.8" rx="13.7" ry="24.3" transform="rotate(-15 1049.8 400.8)"/></clipPath><clipPath id="c30"><ellipse cx="1104.4" cy="389.5" rx="17.8" ry="35" transform="rotate(-8 1104.4 389.5)"/></clipPath><clipPath id="c31"><ellipse cx="952.7" cy="467.4" rx="19.6" ry="17.8" transform="rotate(-10 952.7 467.4)"/></clipPath><clipPath id="c32"><ellipse cx="991.5" cy="473.3" rx="18.8" ry="28" transform="rotate(25 991.5 473.3)"/></clipPath><clipPath id="c33"><ellipse cx="817.1" cy="510.1" rx="16.6" ry="19.7" transform="rotate(25 817.1 510.1)"/></clipPath><clipPath id="c34"><ellipse cx="807.4" cy="567.1" rx="30.2" ry="19.4" transform="rotate(-5 807.4 567.1)"/></clipPath><clipPath id="c35"><ellipse cx="887.1" cy="548.4" rx="24.2" ry="15.9" transform="rotate(0 887.1 548.4)"/></clipPath><clipPath id="c36"><ellipse cx="887.7" cy="604.5" rx="30.5" ry="15" transform="rotate(-3 887.7 604.5)"/></clipPath><clipPath id="c37"><ellipse cx="975.8" cy="513.7" rx="20.8" ry="17.8" transform="rotate(-5 975.8 513.7)"/></clipPath><clipPath id="c38"><ellipse cx="986.3" cy="571.1" rx="23.8" ry="20.9" transform="rotate(-15 986.3 571.1)"/></clipPath></defs><line x1="476.3" y1="232.2" x2="542.1" y2="208.7" stroke="#a85400" stroke-width="5" stroke-linecap="round"/>
<line x1="476.3" y1="232.2" x2="542.1" y2="208.7" stroke="#e27808" stroke-width="3.7" stroke-linecap="round"/>
<line x1="476.3" y1="232.2" x2="542.1" y2="208.7" stroke="#ff9a1c" stroke-width="1.8" stroke-linecap="round"/>
<line x1="542.1" y1="208.7" x2="593.4" y2="249.8" stroke="#a85400" stroke-width="5" stroke-linecap="round"/>
<line x1="542.1" y1="208.7" x2="593.4" y2="249.8" stroke="#e27808" stroke-width="3.7" stroke-linecap="round"/>
<line x1="542.1" y1="208.7" x2="593.4" y2="249.8" stroke="#ff9a1c" stroke-width="1.8" stroke-linecap="round"/>
<line x1="593.4" y1="249.8" x2="579.1" y2="314.3" stroke="#a85400" stroke-width="5" stroke-linecap="round"/>
<line x1="593.4" y1="249.8" x2="579.1" y2="314.3" stroke="#e27808" stroke-width="3.7" stroke-linecap="round"/>
<line x1="593.4" y1="249.8" x2="579.1" y2="314.3" stroke="#ff9a1c" stroke-width="1.8" stroke-linecap="round"/>
<line x1="579.1" y1="314.3" x2="514" y2="337.5" stroke="#a85400" stroke-width="5" stroke-linecap="round"/>
<line x1="579.1" y1="314.3" x2="514" y2="337.5" stroke="#e27808" stroke-width="3.7" stroke-linecap="round"/>
<line x1="579.1" y1="314.3" x2="514" y2="337.5" stroke="#ff9a1c" stroke-width="1.8" stroke-linecap="round"/>
<line x1="492.3" y1="257.2" x2="549.6" y2="289.3" stroke="#a85400" stroke-width="5" stroke-linecap="round"/>
<line x1="492.3" y1="257.2" x2="549.6" y2="289.3" stroke="#e27808" stroke-width="3.7" stroke-linecap="round"/>
<line x1="492.3" y1="257.2" x2="549.6" y2="289.3" stroke="#ff9a1c" stroke-width="1.8" stroke-linecap="round"/>
<line x1="549.6" y1="289.3" x2="544.4" y2="354.1" stroke="#a85400" stroke-width="5" stroke-linecap="round"/>
<line x1="549.6" y1="289.3" x2="544.4" y2="354.1" stroke="#e27808" stroke-width="3.7" stroke-linecap="round"/>
<line x1="549.6" y1="289.3" x2="544.4" y2="354.1" stroke="#ff9a1c" stroke-width="1.8" stroke-linecap="round"/>
<line x1="476.3" y1="232.2" x2="463.5" y2="297.8" stroke="#a85400" stroke-width="5" stroke-linecap="round"/>
<line x1="476.3" y1="232.2" x2="463.5" y2="297.8" stroke="#e27808" stroke-width="3.7" stroke-linecap="round"/>
<line x1="476.3" y1="232.2" x2="463.5" y2="297.8" stroke="#ff9a1c" stroke-width="1.8" stroke-linecap="round"/>
<line x1="431.4" y1="289.7" x2="492.3" y2="257.2" stroke="#a85400" stroke-width="5" stroke-linecap="round"/>
<line x1="431.4" y1="289.7" x2="492.3" y2="257.2" stroke="#e27808" stroke-width="3.7" stroke-linecap="round"/>
<line x1="431.4" y1="289.7" x2="492.3" y2="257.2" stroke="#ff9a1c" stroke-width="1.8" stroke-linecap="round"/>
<line x1="431.4" y1="289.7" x2="426.4" y2="354.2" stroke="#a85400" stroke-width="5" stroke-linecap="round"/>
<line x1="431.4" y1="289.7" x2="426.4" y2="354.2" stroke="#e27808" stroke-width="3.7" stroke-linecap="round"/>
<line x1="431.4" y1="289.7" x2="426.4" y2="354.2" stroke="#ff9a1c" stroke-width="1.8" stroke-linecap="round"/>
<line x1="463.5" y1="297.8" x2="514" y2="337.5" stroke="#a85400" stroke-width="5" stroke-linecap="round"/>
<line x1="463.5" y1="297.8" x2="514" y2="337.5" stroke="#e27808" stroke-width="3.7" stroke-linecap="round"/>
<line x1="463.5" y1="297.8" x2="514" y2="337.5" stroke="#ff9a1c" stroke-width="1.8" stroke-linecap="round"/>
<line x1="426.4" y1="354.2" x2="483.5" y2="386.3" stroke="#a85400" stroke-width="5" stroke-linecap="round"/>
<line x1="426.4" y1="354.2" x2="483.5" y2="386.3" stroke="#e27808" stroke-width="3.7" stroke-linecap="round"/>
<line x1="426.4" y1="354.2" x2="483.5" y2="386.3" stroke="#ff9a1c" stroke-width="1.8" stroke-linecap="round"/>
<line x1="405" y1="376" x2="350.1" y2="384.1" stroke="#a85400" stroke-width="5" stroke-linecap="round"/>
<line x1="405" y1="376" x2="350.1" y2="384.1" stroke="#e27808" stroke-width="3.7" stroke-linecap="round"/>
<line x1="405" y1="376" x2="350.1" y2="384.1" stroke="#ff9a1c" stroke-width="1.8" stroke-linecap="round"/>
<line x1="405" y1="376" x2="422.1" y2="426.9" stroke="#a85400" stroke-width="5" stroke-linecap="round"/>
<line x1="405" y1="376" x2="422.1" y2="426.9" stroke="#e27808" stroke-width="3.7" stroke-linecap="round"/>
<line x1="405" y1="376" x2="422.1" y2="426.9" stroke="#ff9a1c" stroke-width="1.8" stroke-linecap="round"/>
<line x1="350.1" y1="384.1" x2="312.5" y2="442.5" stroke="#a85400" stroke-width="5" stroke-linecap="round"/>
<line x1="350.1" y1="384.1" x2="312.5" y2="442.5" stroke="#e27808" stroke-width="3.7" stroke-linecap="round"/>
<line x1="350.1" y1="384.1" x2="312.5" y2="442.5" stroke="#ff9a1c" stroke-width="1.8" stroke-linecap="round"/>
<line x1="312.5" y1="442.5" x2="328" y2="492" stroke="#a85400" stroke-width="5" stroke-linecap="round"/>
<line x1="312.5" y1="442.5" x2="328" y2="492" stroke="#e27808" stroke-width="3.7" stroke-linecap="round"/>
<line x1="312.5" y1="442.5" x2="328" y2="492" stroke="#ff9a1c" stroke-width="1.8" stroke-linecap="round"/>
<line x1="422.1" y1="426.9" x2="384.7" y2="483.5" stroke="#a85400" stroke-width="5" stroke-linecap="round"/>
<line x1="422.1" y1="426.9" x2="384.7" y2="483.5" stroke="#e27808" stroke-width="3.7" stroke-linecap="round"/>
<line x1="422.1" y1="426.9" x2="384.7" y2="483.5" stroke="#ff9a1c" stroke-width="1.8" stroke-linecap="round"/>
<line x1="483.5" y1="386.3" x2="544.4" y2="354.1" stroke="#a85400" stroke-width="5" stroke-linecap="round"/>
<line x1="483.5" y1="386.3" x2="544.4" y2="354.1" stroke="#e27808" stroke-width="3.7" stroke-linecap="round"/>
<line x1="483.5" y1="386.3" x2="544.4" y2="354.1" stroke="#ff9a1c" stroke-width="1.8" stroke-linecap="round"/>
<line x1="514" y1="337.5" x2="497.6" y2="424.1" stroke="#a85400" stroke-width="5" stroke-linecap="round"/>
<line x1="514" y1="337.5" x2="497.6" y2="424.1" stroke="#e27808" stroke-width="3.7" stroke-linecap="round"/>
<line x1="514" y1="337.5" x2="497.6" y2="424.1" stroke="#ff9a1c" stroke-width="1.8" stroke-linecap="round"/>
<line x1="544.4" y1="354.1" x2="483.5" y2="386.3" stroke="#a85400" stroke-width="5" stroke-linecap="round"/>
<line x1="544.4" y1="354.1" x2="483.5" y2="386.3" stroke="#e27808" stroke-width="3.7" stroke-linecap="round"/>
<line x1="544.4" y1="354.1" x2="483.5" y2="386.3" stroke="#ff9a1c" stroke-width="1.8" stroke-linecap="round"/>
<line x1="483.5" y1="386.3" x2="479.2" y2="467.5" stroke="#a85400" stroke-width="5" stroke-linecap="round"/>
<line x1="483.5" y1="386.3" x2="479.2" y2="467.5" stroke="#e27808" stroke-width="3.7" stroke-linecap="round"/>
<line x1="483.5" y1="386.3" x2="479.2" y2="467.5" stroke="#ff9a1c" stroke-width="1.8" stroke-linecap="round"/>
<line x1="422.1" y1="426.9" x2="497.6" y2="424.1" stroke="#a85400" stroke-width="5" stroke-linecap="round"/>
<line x1="422.1" y1="426.9" x2="497.6" y2="424.1" stroke="#e27808" stroke-width="3.7" stroke-linecap="round"/>
<line x1="422.1" y1="426.9" x2="497.6" y2="424.1" stroke="#ff9a1c" stroke-width="1.8" stroke-linecap="round"/>
<line x1="497.6" y1="424.1" x2="563.6" y2="455.1" stroke="#a85400" stroke-width="5" stroke-linecap="round"/>
<line x1="497.6" y1="424.1" x2="563.6" y2="455.1" stroke="#e27808" stroke-width="3.7" stroke-linecap="round"/>
<line x1="497.6" y1="424.1" x2="563.6" y2="455.1" stroke="#ff9a1c" stroke-width="1.8" stroke-linecap="round"/>
<line x1="565.1" y1="436.2" x2="617.6" y2="457.2" stroke="#a85400" stroke-width="5" stroke-linecap="round"/>
<line x1="565.1" y1="436.2" x2="617.6" y2="457.2" stroke="#e27808" stroke-width="3.7" stroke-linecap="round"/>
<line x1="565.1" y1="436.2" x2="617.6" y2="457.2" stroke="#ff9a1c" stroke-width="1.8" stroke-linecap="round"/>
<line x1="563.6" y1="455.1" x2="615.2" y2="493.4" stroke="#a85400" stroke-width="5" stroke-linecap="round"/>
<line x1="563.6" y1="455.1" x2="615.2" y2="493.4" stroke="#e27808" stroke-width="3.7" stroke-linecap="round"/>
<line x1="563.6" y1="455.1" x2="615.2" y2="493.4" stroke="#ff9a1c" stroke-width="1.8" stroke-linecap="round"/>
<line x1="617.6" y1="457.2" x2="668.6" y2="497.4" stroke="#a85400" stroke-width="5" stroke-linecap="round"/>
<line x1="617.6" y1="457.2" x2="668.6" y2="497.4" stroke="#e27808" stroke-width="3.7" stroke-linecap="round"/>
<line x1="617.6" y1="457.2" x2="668.6" y2="497.4" stroke="#ff9a1c" stroke-width="1.8" stroke-linecap="round"/>
<line x1="615.2" y1="493.4" x2="666.8" y2="515.9" stroke="#a85400" stroke-width="5" stroke-linecap="round"/>
<line x1="615.2" y1="493.4" x2="666.8" y2="515.9" stroke="#e27808" stroke-width="3.7" stroke-linecap="round"/>
<line x1="615.2" y1="493.4" x2="666.8" y2="515.9" stroke="#ff9a1c" stroke-width="1.8" stroke-linecap="round"/>
<line x1="615.2" y1="540" x2="646.1" y2="590.7" stroke="#a85400" stroke-width="5" stroke-linecap="round"/>
<line x1="615.2" y1="540" x2="646.1" y2="590.7" stroke="#e27808" stroke-width="3.7" stroke-linecap="round"/>
<line x1="615.2" y1="540" x2="646.1" y2="590.7" stroke="#ff9a1c" stroke-width="1.8" stroke-linecap="round"/>
<line x1="479.2" y1="467.5" x2="455" y2="485" stroke="#a85400" stroke-width="5" stroke-linecap="round"/>
<line x1="479.2" y1="467.5" x2="455" y2="485" stroke="#e27808" stroke-width="3.7" stroke-linecap="round"/>
<line x1="479.2" y1="467.5" x2="455" y2="485" stroke="#ff9a1c" stroke-width="1.8" stroke-linecap="round"/>
<line x1="479.2" y1="467.5" x2="500" y2="485" stroke="#a85400" stroke-width="5" stroke-linecap="round"/>
<line x1="479.2" y1="467.5" x2="500" y2="485" stroke="#e27808" stroke-width="3.7" stroke-linecap="round"/>
<line x1="479.2" y1="467.5" x2="500" y2="485" stroke="#ff9a1c" stroke-width="1.8" stroke-linecap="round"/>
<g transform="translate(476.3 232.2) scale(21.4)"><circle r="1" fill="url(#gGray)"/><g fill="none" stroke="#101010" stroke-width="0.047"><circle r="0.99" stroke="#5a5a5a" stroke-width="0.033"/><path d="M-0.08 -1Q0.1 -0.2 0.08 0L0.07 1"/><path d="M-0.98 -0.18Q-0.05 -1.21 0.93 -0.36"/><path d="M-0.95 0.32Q0.08 1.13 0.97 0.26"/></g></g>
<g transform="translate(542.1 208.7) scale(22.9)"><circle r="1" fill="url(#gGray)"/><g fill="none" stroke="#101010" stroke-width="0.044"><circle r="0.99" stroke="#5a5a5a" stroke-width="0.031"/><path d="M-0.08 -1Q0.1 -0.2 0.08 0L0.07 1"/><path d="M-0.98 -0.18Q-0.05 -1.21 0.93 -0.36"/><path d="M-0.95 0.32Q0.08 1.13 0.97 0.26"/></g></g>
<g transform="translate(593.4 249.8) scale(22.2)"><circle r="1" fill="url(#gGray)"/><g fill="none" stroke="#101010" stroke-width="0.045"><circle r="0.99" stroke="#5a5a5a" stroke-width="0.032"/><path d="M-0.08 -1Q0.1 -0.2 0.08 0L0.07 1"/><path d="M-0.98 -0.18Q-0.05 -1.21 0.93 -0.36"/><path d="M-0.95 0.32Q0.08 1.13 0.97 0.26"/></g></g>
<g transform="translate(492.3 257.2) scale(19.7)"><circle r="1" fill="url(#gGray)"/><g fill="none" stroke="#101010" stroke-width="0.051"><circle r="0.99" stroke="#5a5a5a" stroke-width="0.036"/><path d="M-0.08 -1Q0.1 -0.2 0.08 0L0.07 1"/><path d="M-0.98 -0.18Q-0.05 -1.21 0.93 -0.36"/><path d="M-0.95 0.32Q0.08 1.13 0.97 0.26"/></g></g>
<g transform="translate(463.5 297.8) scale(18.8)"><circle r="1" fill="url(#gGray)"/><g fill="none" stroke="#101010" stroke-width="0.053"><circle r="0.99" stroke="#5a5a5a" stroke-width="0.037"/><path d="M-0.08 -1Q0.1 -0.2 0.08 0L0.07 1"/><path d="M-0.98 -0.18Q-0.05 -1.21 0.93 -0.36"/><path d="M-0.95 0.32Q0.08 1.13 0.97 0.26"/></g></g>
<g transform="translate(431.4 289.7) scale(21.4)"><circle r="1" fill="url(#gGray)"/><g fill="none" stroke="#101010" stroke-width="0.047"><circle r="0.99" stroke="#5a5a5a" stroke-width="0.033"/><path d="M-0.08 -1Q0.1 -0.2 0.08 0L0.07 1"/><path d="M-0.98 -0.18Q-0.05 -1.21 0.93 -0.36"/><path d="M-0.95 0.32Q0.08 1.13 0.97 0.26"/></g></g>
<g transform="translate(549.6 289.3) scale(17.5)"><circle r="1" fill="url(#gGray)"/><g fill="none" stroke="#101010" stroke-width="0.057"><circle r="0.99" stroke="#5a5a5a" stroke-width="0.040"/><path d="M-0.08 -1Q0.1 -0.2 0.08 0L0.07 1"/><path d="M-0.98 -0.18Q-0.05 -1.21 0.93 -0.36"/><path d="M-0.95 0.32Q0.08 1.13 0.97 0.26"/></g></g>
<g transform="translate(579.1 314.3) scale(19.7)"><circle r="1" fill="url(#gGray)"/><g fill="none" stroke="#101010" stroke-width="0.051"><circle r="0.99" stroke="#5a5a5a" stroke-width="0.036"/><path d="M-0.08 -1Q0.1 -0.2 0.08 0L0.07 1"/><path d="M-0.98 -0.18Q-0.05 -1.21 0.93 -0.36"/><path d="M-0.95 0.32Q0.08 1.13 0.97 0.26"/></g></g>
<g transform="translate(544.4 354.1) scale(16.6)"><circle r="1" fill="url(#gGray)"/><g fill="none" stroke="#101010" stroke-width="0.060"><circle r="0.99" stroke="#5a5a5a" stroke-width="0.042"/><path d="M-0.08 -1Q0.1 -0.2 0.08 0L0.07 1"/><path d="M-0.98 -0.18Q-0.05 -1.21 0.93 -0.36"/><path d="M-0.95 0.32Q0.08 1.13 0.97 0.26"/></g></g>
<g transform="translate(514 337.5) scale(17)"><circle r="1" fill="url(#gGray)"/><g fill="none" stroke="#101010" stroke-width="0.059"><circle r="0.99" stroke="#5a5a5a" stroke-width="0.041"/><path d="M-0.08 -1Q0.1 -0.2 0.08 0L0.07 1"/><path d="M-0.98 -0.18Q-0.05 -1.21 0.93 -0.36"/><path d="M-0.95 0.32Q0.08 1.13 0.97 0.26"/></g></g>
<g transform="translate(405 376) scale(19.2)"><circle r="1" fill="url(#gGray)"/><g fill="none" stroke="#101010" stroke-width="0.052"><circle r="0.99" stroke="#5a5a5a" stroke-width="0.036"/><path d="M-0.08 -1Q0.1 -0.2 0.08 0L0.07 1"/><path d="M-0.98 -0.18Q-0.05 -1.21 0.93 -0.36"/><path d="M-0.95 0.32Q0.08 1.13 0.97 0.26"/></g></g>
<g transform="translate(426.4 354.2) scale(18.6)"><circle r="1" fill="url(#gGray)"/><g fill="none" stroke="#101010" stroke-width="0.054"><circle r="0.99" stroke="#5a5a5a" stroke-width="0.038"/><path d="M-0.08 -1Q0.1 -0.2 0.08 0L0.07 1"/><path d="M-0.98 -0.18Q-0.05 -1.21 0.93 -0.36"/><path d="M-0.95 0.32Q0.08 1.13 0.97 0.26"/></g></g>
<g transform="translate(350.1 384.1) scale(21.4)"><circle r="1" fill="url(#gGray)"/><g fill="none" stroke="#101010" stroke-width="0.047"><circle r="0.99" stroke="#5a5a5a" stroke-width="0.033"/><path d="M-0.08 -1Q0.1 -0.2 0.08 0L0.07 1"/><path d="M-0.98 -0.18Q-0.05 -1.21 0.93 -0.36"/><path d="M-0.95 0.32Q0.08 1.13 0.97 0.26"/></g></g>
<g transform="translate(483.5 386.3) scale(15.6)"><circle r="1" fill="url(#gGray)"/><g fill="none" stroke="#101010" stroke-width="0.064"><circle r="0.99" stroke="#5a5a5a" stroke-width="0.045"/><path d="M-0.08 -1Q0.1 -0.2 0.08 0L0.07 1"/><path d="M-0.98 -0.18Q-0.05 -1.21 0.93 -0.36"/><path d="M-0.95 0.32Q0.08 1.13 0.97 0.26"/></g></g>
<g transform="translate(422.1 426.9) scale(16)"><circle r="1" fill="url(#gGray)"/><g fill="none" stroke="#101010" stroke-width="0.062"><circle r="0.99" stroke="#5a5a5a" stroke-width="0.044"/><path d="M-0.08 -1Q0.1 -0.2 0.08 0L0.07 1"/><path d="M-0.98 -0.18Q-0.05 -1.21 0.93 -0.36"/><path d="M-0.95 0.32Q0.08 1.13 0.97 0.26"/></g></g>
<g transform="translate(312.5 442.5) scale(22.4)"><circle r="1" fill="url(#gGray)"/><g fill="none" stroke="#101010" stroke-width="0.045"><circle r="0.99" stroke="#5a5a5a" stroke-width="0.031"/><path d="M-0.08 -1Q0.1 -0.2 0.08 0L0.07 1"/><path d="M-0.98 -0.18Q-0.05 -1.21 0.93 -0.36"/><path d="M-0.95 0.32Q0.08 1.13 0.97 0.26"/></g></g>
<g transform="translate(328 492) scale(18)"><circle r="1" fill="url(#gGray)"/><g fill="none" stroke="#101010" stroke-width="0.056"><circle r="0.99" stroke="#5a5a5a" stroke-width="0.039"/><path d="M-0.08 -1Q0.1 -0.2 0.08 0L0.07 1"/><path d="M-0.98 -0.18Q-0.05 -1.21 0.93 -0.36"/><path d="M-0.95 0.32Q0.08 1.13 0.97 0.26"/></g></g>
<g transform="translate(343.7 481.5) scale(19)"><circle r="1" fill="url(#gGray)"/><g fill="none" stroke="#101010" stroke-width="0.053"><circle r="0.99" stroke="#5a5a5a" stroke-width="0.037"/><path d="M-0.08 -1Q0.1 -0.2 0.08 0L0.07 1"/><path d="M-0.98 -0.18Q-0.05 -1.21 0.93 -0.36"/><path d="M-0.95 0.32Q0.08 1.13 0.97 0.26"/></g></g>
<g transform="translate(384.7 483.5) scale(16)"><circle r="1" fill="url(#gGray)"/><g fill="none" stroke="#101010" stroke-width="0.062"><circle r="0.99" stroke="#5a5a5a" stroke-width="0.044"/><path d="M-0.08 -1Q0.1 -0.2 0.08 0L0.07 1"/><path d="M-0.98 -0.18Q-0.05 -1.21 0.93 -0.36"/><path d="M-0.95 0.32Q0.08 1.13 0.97 0.26"/></g></g>
<g transform="translate(498.5 466.3) scale(10.3)"><circle r="1" fill="url(#gPale)"/></g>
<ellipse cx="497.6" cy="424.1" rx="14.5" ry="14.5" transform="rotate(0 497.6 424.1)" fill="url(#gMag)"/><g clip-path="url(#c1)"><path d="M496.3 423 L484.7 417.2 Q493.6 414.1 504 416.2Z" fill="#007890" stroke="#101010" stroke-width="0.7" stroke-linejoin="round"/><path d="M496.3 423 L494.1 436.5 C492.8 435.4 487.9 433 486.2 430.1 C484.6 427.1 484.5 420.6 484.1 418.7Z" fill="#00e8ff" stroke="#101010" stroke-width="0.7" stroke-linejoin="round"/><path d="M496.3 423 L504 416.6 C503 419.9 499.6 433.2 498 436.5 C496.4 439.8 494.8 436.5 494.1 436.5Z" fill="#00a8d8" stroke="#101010" stroke-width="0.7" stroke-linejoin="round"/></g><ellipse cx="497.6" cy="424.1" rx="14.5" ry="14.5" transform="rotate(0 497.6 424.1)" fill="none" stroke="#500050" stroke-width="1"/>
<ellipse cx="479.2" cy="467.5" rx="14" ry="14" transform="rotate(0 479.2 467.5)" fill="url(#gMag)"/><g clip-path="url(#c2)"><path d="M479.2 467.9 L473 456.8 Q483.3 457.9 491.2 464.9Z" fill="#007890" stroke="#101010" stroke-width="0.7" stroke-linejoin="round"/><path d="M479.2 467.9 L476.6 477.1 C475.8 476 472.9 473.8 471.9 470.7 C471 467.6 471 460.5 470.9 458.5Z" fill="#00e8ff" stroke="#101010" stroke-width="0.7" stroke-linejoin="round"/><path d="M479.2 469.2 L492 466.6 Q490.3 473.4 482 477.7Z" fill="#00a8d8" stroke="#101010" stroke-width="0.7" stroke-linejoin="round"/></g><ellipse cx="479.2" cy="467.5" rx="14" ry="14" transform="rotate(0 479.2 467.5)" fill="none" stroke="#500050" stroke-width="1"/>
<line x1="480.9" y1="404.4" x2="479.2" y2="465.3" stroke="#a85400" stroke-width="3.4" stroke-linecap="round"/>
<line x1="480.9" y1="404.4" x2="479.2" y2="465.3" stroke="#e27808" stroke-width="2.1" stroke-linecap="round"/>
<line x1="480.9" y1="404.4" x2="479.2" y2="465.3" stroke="#ff9a1c" stroke-width="0.6" stroke-linecap="round"/>
<line x1="496.9" y1="424.7" x2="492.7" y2="456.8" stroke="#a85400" stroke-width="3.4" stroke-linecap="round"/>
<line x1="496.9" y1="424.7" x2="492.7" y2="456.8" stroke="#e27808" stroke-width="2.1" stroke-linecap="round"/>
<line x1="496.9" y1="424.7" x2="492.7" y2="456.8" stroke="#ff9a1c" stroke-width="0.6" stroke-linecap="round"/>
<g transform="translate(565.1 436.2) scale(20.4)"><circle r="1" fill="url(#gGray)"/><g fill="none" stroke="#101010" stroke-width="0.049"><circle r="0.99" stroke="#5a5a5a" stroke-width="0.034"/><path d="M-0.08 -1Q0.1 -0.2 0.08 0L0.07 1"/><path d="M-0.98 -0.18Q-0.05 -1.21 0.93 -0.36"/><path d="M-0.95 0.32Q0.08 1.13 0.97 0.26"/></g></g>
<g transform="translate(617.6 457.2) scale(20.4)"><circle r="1" fill="url(#gGray)"/><g fill="none" stroke="#101010" stroke-width="0.049"><circle r="0.99" stroke="#5a5a5a" stroke-width="0.034"/><path d="M-0.08 -1Q0.1 -0.2 0.08 0L0.07 1"/><path d="M-0.98 -0.18Q-0.05 -1.21 0.93 -0.36"/><path d="M-0.95 0.32Q0.08 1.13 0.97 0.26"/></g></g>
<g transform="translate(563.6 455.1) scale(17.3)"><circle r="1" fill="url(#gGray)"/><g fill="none" stroke="#101010" stroke-width="0.058"><circle r="0.99" stroke="#5a5a5a" stroke-width="0.040"/><path d="M-0.08 -1Q0.1 -0.2 0.08 0L0.07 1"/><path d="M-0.98 -0.18Q-0.05 -1.21 0.93 -0.36"/><path d="M-0.95 0.32Q0.08 1.13 0.97 0.26"/></g></g>
<g transform="translate(668.6 497.4) scale(21.6)"><circle r="1" fill="url(#gGray)"/><g fill="none" stroke="#101010" stroke-width="0.046"><circle r="0.99" stroke="#5a5a5a" stroke-width="0.032"/><path d="M-0.08 -1Q0.1 -0.2 0.08 0L0.07 1"/><path d="M-0.98 -0.18Q-0.05 -1.21 0.93 -0.36"/><path d="M-0.95 0.32Q0.08 1.13 0.97 0.26"/></g></g>
<g transform="translate(615.2 493.4) scale(18)"><circle r="1" fill="url(#gGray)"/><g fill="none" stroke="#101010" stroke-width="0.056"><circle r="0.99" stroke="#5a5a5a" stroke-width="0.039"/><path d="M-0.08 -1Q0.1 -0.2 0.08 0L0.07 1"/><path d="M-0.98 -0.18Q-0.05 -1.21 0.93 -0.36"/><path d="M-0.95 0.32Q0.08 1.13 0.97 0.26"/></g></g>
<g transform="translate(666.8 515.9) scale(22)"><circle r="1" fill="url(#gGray)"/><g fill="none" stroke="#101010" stroke-width="0.045"><circle r="0.99" stroke="#5a5a5a" stroke-width="0.032"/><path d="M-0.08 -1Q0.1 -0.2 0.08 0L0.07 1"/><path d="M-0.98 -0.18Q-0.05 -1.21 0.93 -0.36"/><path d="M-0.95 0.32Q0.08 1.13 0.97 0.26"/></g></g>
<g transform="translate(615.2 540) scale(18.5)"><circle r="1" fill="url(#gGray)"/><g fill="none" stroke="#101010" stroke-width="0.054"><circle r="0.99" stroke="#5a5a5a" stroke-width="0.038"/><path d="M-0.08 -1Q0.1 -0.2 0.08 0L0.07 1"/><path d="M-0.98 -0.18Q-0.05 -1.21 0.93 -0.36"/><path d="M-0.95 0.32Q0.08 1.13 0.97 0.26"/></g></g>
<g transform="translate(624.4 603.9) scale(20)"><circle r="1" fill="url(#gGray)"/><g fill="none" stroke="#101010" stroke-width="0.050"><circle r="0.99" stroke="#5a5a5a" stroke-width="0.035"/><path d="M-0.08 -1Q0.1 -0.2 0.08 0L0.07 1"/><path d="M-0.98 -0.18Q-0.05 -1.21 0.93 -0.36"/><path d="M-0.95 0.32Q0.08 1.13 0.97 0.26"/></g></g>
<g transform="translate(646.1 590.7) scale(20.4)"><circle r="1" fill="url(#gGray)"/><g fill="none" stroke="#101010" stroke-width="0.049"><circle r="0.99" stroke="#5a5a5a" stroke-width="0.034"/><path d="M-0.08 -1Q0.1 -0.2 0.08 0L0.07 1"/><path d="M-0.98 -0.18Q-0.05 -1.21 0.93 -0.36"/><path d="M-0.95 0.32Q0.08 1.13 0.97 0.26"/></g></g>
<ellipse cx="906.4" cy="271.9" rx="30" ry="18" transform="rotate(-20 906.4 271.9)" fill="url(#gRed)"/><g clip-path="url(#c3)"><path d="M919.3 265.6 L930.7 259.9 C931.3 262 935.1 267.7 934.1 272.3 C933.2 276.9 928.4 283.7 925 287.5 C921.6 291.3 915.5 293.8 913.6 295.1Z" fill="#dcd400" stroke="#101010" stroke-width="0.7" stroke-linejoin="round"/></g><ellipse cx="906.4" cy="271.9" rx="30" ry="18" transform="rotate(-20 906.4 271.9)" fill="none" stroke="#200000" stroke-width="1"/>
<ellipse cx="905" cy="275.1" rx="18" ry="9.9" transform="rotate(-20 905 275.1)" fill="url(#gGrayE)"/><g clip-path="url(#c4)"><path d="M896.5 282.7 L892.7 276.1 C896.6 274.5 912 267.1 916.4 266.6 C920.9 266.1 918.8 272.1 919.3 273.2Z" fill="#007c98" stroke="#101010" stroke-width="0.7" stroke-linejoin="round"/><path d="M896.5 282.7 L919.3 273.2 C919.6 274.5 924 278.2 921.2 280.8 C918.3 283.5 905.4 288 902.2 289.4Z" fill="#00b4e8" stroke="#101010" stroke-width="0.7" stroke-linejoin="round"/></g><ellipse cx="905" cy="275.1" rx="18" ry="9.9" transform="rotate(-20 905 275.1)" fill="none" stroke="#303030" stroke-width="1"/>
<line x1="783.4" y1="193.4" x2="825.1" y2="230.8" stroke="#a85400" stroke-width="4.7" stroke-linecap="round"/>
<line x1="783.4" y1="193.4" x2="825.1" y2="230.8" stroke="#e27808" stroke-width="3.4" stroke-linecap="round"/>
<line x1="783.4" y1="193.4" x2="825.1" y2="230.8" stroke="#ff9a1c" stroke-width="1.5" stroke-linecap="round"/>
<line x1="825.1" y1="230.8" x2="896.5" y2="292.2" stroke="#a85400" stroke-width="4.7" stroke-linecap="round"/>
<line x1="825.1" y1="230.8" x2="896.5" y2="292.2" stroke="#e27808" stroke-width="3.4" stroke-linecap="round"/>
<line x1="825.1" y1="230.8" x2="896.5" y2="292.2" stroke="#ff9a1c" stroke-width="1.5" stroke-linecap="round"/>
<line x1="891.8" y1="163.1" x2="893.9" y2="219.5" stroke="#a85400" stroke-width="4.7" stroke-linecap="round"/>
<line x1="891.8" y1="163.1" x2="893.9" y2="219.5" stroke="#e27808" stroke-width="3.4" stroke-linecap="round"/>
<line x1="891.8" y1="163.1" x2="893.9" y2="219.5" stroke="#ff9a1c" stroke-width="1.5" stroke-linecap="round"/>
<line x1="893.9" y1="219.5" x2="891.7" y2="308.4" stroke="#a85400" stroke-width="4.7" stroke-linecap="round"/>
<line x1="893.9" y1="219.5" x2="891.7" y2="308.4" stroke="#e27808" stroke-width="3.4" stroke-linecap="round"/>
<line x1="893.9" y1="219.5" x2="891.7" y2="308.4" stroke="#ff9a1c" stroke-width="1.5" stroke-linecap="round"/>
<line x1="1009.7" y1="194.5" x2="969.5" y2="234" stroke="#a85400" stroke-width="4.7" stroke-linecap="round"/>
<line x1="1009.7" y1="194.5" x2="969.5" y2="234" stroke="#e27808" stroke-width="3.4" stroke-linecap="round"/>
<line x1="1009.7" y1="194.5" x2="969.5" y2="234" stroke="#ff9a1c" stroke-width="1.5" stroke-linecap="round"/>
<line x1="969.5" y1="234" x2="896.5" y2="292.2" stroke="#a85400" stroke-width="4.7" stroke-linecap="round"/>
<line x1="969.5" y1="234" x2="896.5" y2="292.2" stroke="#e27808" stroke-width="3.4" stroke-linecap="round"/>
<line x1="969.5" y1="234" x2="896.5" y2="292.2" stroke="#ff9a1c" stroke-width="1.5" stroke-linecap="round"/>
<line x1="751.3" y1="303.2" x2="806.4" y2="312.4" stroke="#a85400" stroke-width="4.7" stroke-linecap="round"/>
<line x1="751.3" y1="303.2" x2="806.4" y2="312.4" stroke="#e27808" stroke-width="3.4" stroke-linecap="round"/>
<line x1="751.3" y1="303.2" x2="806.4" y2="312.4" stroke="#ff9a1c" stroke-width="1.5" stroke-linecap="round"/>
<line x1="805.9" y1="312" x2="891.7" y2="312.3" stroke="#a85400" stroke-width="4.7" stroke-linecap="round"/>
<line x1="805.9" y1="312" x2="891.7" y2="312.3" stroke="#e27808" stroke-width="3.4" stroke-linecap="round"/>
<line x1="805.9" y1="312" x2="891.7" y2="312.3" stroke="#ff9a1c" stroke-width="1.5" stroke-linecap="round"/>
<line x1="892.7" y1="374.9" x2="825" y2="419.4" stroke="#a85400" stroke-width="4.7" stroke-linecap="round"/>
<line x1="892.7" y1="374.9" x2="825" y2="419.4" stroke="#e27808" stroke-width="3.4" stroke-linecap="round"/>
<line x1="892.7" y1="374.9" x2="825" y2="419.4" stroke="#ff9a1c" stroke-width="1.5" stroke-linecap="round"/>
<line x1="892.7" y1="374.9" x2="888.7" y2="455.7" stroke="#a85400" stroke-width="4.7" stroke-linecap="round"/>
<line x1="892.7" y1="374.9" x2="888.7" y2="455.7" stroke="#e27808" stroke-width="3.4" stroke-linecap="round"/>
<line x1="892.7" y1="374.9" x2="888.7" y2="455.7" stroke="#ff9a1c" stroke-width="1.5" stroke-linecap="round"/>
<line x1="892.7" y1="374.9" x2="961.9" y2="422.6" stroke="#a85400" stroke-width="4.7" stroke-linecap="round"/>
<line x1="892.7" y1="374.9" x2="961.9" y2="422.6" stroke="#e27808" stroke-width="3.4" stroke-linecap="round"/>
<line x1="892.7" y1="374.9" x2="961.9" y2="422.6" stroke="#ff9a1c" stroke-width="1.5" stroke-linecap="round"/>
<line x1="884.7" y1="337.8" x2="892.7" y2="374.9" stroke="#a85400" stroke-width="4.7" stroke-linecap="round"/>
<line x1="884.7" y1="337.8" x2="892.7" y2="374.9" stroke="#e27808" stroke-width="3.4" stroke-linecap="round"/>
<line x1="884.7" y1="337.8" x2="892.7" y2="374.9" stroke="#ff9a1c" stroke-width="1.5" stroke-linecap="round"/>
<line x1="686.1" y1="409.3" x2="736.5" y2="407.6" stroke="#a85400" stroke-width="4.7" stroke-linecap="round"/>
<line x1="686.1" y1="409.3" x2="736.5" y2="407.6" stroke="#e27808" stroke-width="3.4" stroke-linecap="round"/>
<line x1="686.1" y1="409.3" x2="736.5" y2="407.6" stroke="#ff9a1c" stroke-width="1.5" stroke-linecap="round"/>
<line x1="736.5" y1="407.6" x2="825" y2="419.4" stroke="#a85400" stroke-width="4.7" stroke-linecap="round"/>
<line x1="736.5" y1="407.6" x2="825" y2="419.4" stroke="#e27808" stroke-width="3.4" stroke-linecap="round"/>
<line x1="736.5" y1="407.6" x2="825" y2="419.4" stroke="#ff9a1c" stroke-width="1.5" stroke-linecap="round"/>
<line x1="803.2" y1="391.6" x2="825" y2="419.4" stroke="#a85400" stroke-width="4.7" stroke-linecap="round"/>
<line x1="803.2" y1="391.6" x2="825" y2="419.4" stroke="#e27808" stroke-width="3.4" stroke-linecap="round"/>
<line x1="803.2" y1="391.6" x2="825" y2="419.4" stroke="#ff9a1c" stroke-width="1.5" stroke-linecap="round"/>
<line x1="825" y1="419.4" x2="813.9" y2="465.3" stroke="#a85400" stroke-width="4.7" stroke-linecap="round"/>
<line x1="825" y1="419.4" x2="813.9" y2="465.3" stroke="#e27808" stroke-width="3.4" stroke-linecap="round"/>
<line x1="825" y1="419.4" x2="813.9" y2="465.3" stroke="#ff9a1c" stroke-width="1.5" stroke-linecap="round"/>
<line x1="766.2" y1="469.6" x2="813.9" y2="465.3" stroke="#a85400" stroke-width="4.7" stroke-linecap="round"/>
<line x1="766.2" y1="469.6" x2="813.9" y2="465.3" stroke="#e27808" stroke-width="3.4" stroke-linecap="round"/>
<line x1="766.2" y1="469.6" x2="813.9" y2="465.3" stroke="#ff9a1c" stroke-width="1.5" stroke-linecap="round"/>
<line x1="813.9" y1="465.3" x2="888.7" y2="455.7" stroke="#a85400" stroke-width="4.7" stroke-linecap="round"/>
<line x1="813.9" y1="465.3" x2="888.7" y2="455.7" stroke="#e27808" stroke-width="3.4" stroke-linecap="round"/>
<line x1="813.9" y1="465.3" x2="888.7" y2="455.7" stroke="#ff9a1c" stroke-width="1.5" stroke-linecap="round"/>
<line x1="813.9" y1="465.3" x2="817.3" y2="509.9" stroke="#a85400" stroke-width="4.7" stroke-linecap="round"/>
<line x1="813.9" y1="465.3" x2="817.3" y2="509.9" stroke="#e27808" stroke-width="3.4" stroke-linecap="round"/>
<line x1="813.9" y1="465.3" x2="817.3" y2="509.9" stroke="#ff9a1c" stroke-width="1.5" stroke-linecap="round"/>
<line x1="817.3" y1="509.9" x2="807.6" y2="567.5" stroke="#a85400" stroke-width="4.7" stroke-linecap="round"/>
<line x1="817.3" y1="509.9" x2="807.6" y2="567.5" stroke="#e27808" stroke-width="3.4" stroke-linecap="round"/>
<line x1="817.3" y1="509.9" x2="807.6" y2="567.5" stroke="#ff9a1c" stroke-width="1.5" stroke-linecap="round"/>
<line x1="888.7" y1="455.7" x2="886.6" y2="548.7" stroke="#a85400" stroke-width="4.7" stroke-linecap="round"/>
<line x1="888.7" y1="455.7" x2="886.6" y2="548.7" stroke="#e27808" stroke-width="3.4" stroke-linecap="round"/>
<line x1="888.7" y1="455.7" x2="886.6" y2="548.7" stroke="#ff9a1c" stroke-width="1.5" stroke-linecap="round"/>
<line x1="886.6" y1="548.7" x2="887.4" y2="604.6" stroke="#a85400" stroke-width="4.7" stroke-linecap="round"/>
<line x1="886.6" y1="548.7" x2="887.4" y2="604.6" stroke="#e27808" stroke-width="3.4" stroke-linecap="round"/>
<line x1="886.6" y1="548.7" x2="887.4" y2="604.6" stroke="#ff9a1c" stroke-width="1.5" stroke-linecap="round"/>
<line x1="888.7" y1="455.7" x2="952.3" y2="467.5" stroke="#a85400" stroke-width="4.7" stroke-linecap="round"/>
<line x1="888.7" y1="455.7" x2="952.3" y2="467.5" stroke="#e27808" stroke-width="3.4" stroke-linecap="round"/>
<line x1="888.7" y1="455.7" x2="952.3" y2="467.5" stroke="#ff9a1c" stroke-width="1.5" stroke-linecap="round"/>
<line x1="961.9" y1="422.6" x2="976.1" y2="514" stroke="#a85400" stroke-width="4.7" stroke-linecap="round"/>
<line x1="961.9" y1="422.6" x2="976.1" y2="514" stroke="#e27808" stroke-width="3.4" stroke-linecap="round"/>
<line x1="961.9" y1="422.6" x2="976.1" y2="514" stroke="#ff9a1c" stroke-width="1.5" stroke-linecap="round"/>
<line x1="952.3" y1="467.5" x2="990.7" y2="472.8" stroke="#a85400" stroke-width="4.7" stroke-linecap="round"/>
<line x1="952.3" y1="467.5" x2="990.7" y2="472.8" stroke="#e27808" stroke-width="3.4" stroke-linecap="round"/>
<line x1="952.3" y1="467.5" x2="990.7" y2="472.8" stroke="#ff9a1c" stroke-width="1.5" stroke-linecap="round"/>
<line x1="961.9" y1="422.6" x2="1049.5" y2="400.1" stroke="#a85400" stroke-width="4.7" stroke-linecap="round"/>
<line x1="961.9" y1="422.6" x2="1049.5" y2="400.1" stroke="#e27808" stroke-width="3.4" stroke-linecap="round"/>
<line x1="961.9" y1="422.6" x2="1049.5" y2="400.1" stroke="#ff9a1c" stroke-width="1.5" stroke-linecap="round"/>
<line x1="1049.5" y1="400.1" x2="1104" y2="389.5" stroke="#a85400" stroke-width="4.7" stroke-linecap="round"/>
<line x1="1049.5" y1="400.1" x2="1104" y2="389.5" stroke="#e27808" stroke-width="3.4" stroke-linecap="round"/>
<line x1="1049.5" y1="400.1" x2="1104" y2="389.5" stroke="#ff9a1c" stroke-width="1.5" stroke-linecap="round"/>
<line x1="976.1" y1="514" x2="986.3" y2="570.8" stroke="#a85400" stroke-width="4.7" stroke-linecap="round"/>
<line x1="976.1" y1="514" x2="986.3" y2="570.8" stroke="#e27808" stroke-width="3.4" stroke-linecap="round"/>
<line x1="976.1" y1="514" x2="986.3" y2="570.8" stroke="#ff9a1c" stroke-width="1.5" stroke-linecap="round"/>
<line x1="961.9" y1="422.6" x2="980" y2="402.3" stroke="#a85400" stroke-width="4.7" stroke-linecap="round"/>
<line x1="961.9" y1="422.6" x2="980" y2="402.3" stroke="#e27808" stroke-width="3.4" stroke-linecap="round"/>
<line x1="961.9" y1="422.6" x2="980" y2="402.3" stroke="#ff9a1c" stroke-width="1.5" stroke-linecap="round"/>
<ellipse cx="891.8" cy="163.1" rx="38.5" ry="17.1" transform="rotate(5 891.8 163.1)" fill="url(#gRed)"/><g clip-path="url(#c5)"><g transform="rotate(5 891.8 163.1)" fill="none" stroke="#151515" stroke-width="0.9"><path d="M889.5 146 Q895.6 163.1 891 180.2"/><path d="M853.3 161.7 Q891.8 169.1 930.3 161.7"/></g><path d="M889.2 165.2 L894.6 146 C897.4 146.6 906.5 147.4 911.7 149.6 C916.8 151.8 922.4 156.3 925.6 159.2 C928.7 162.2 929.7 166 930.5 167.4Z" fill="#dcd400" stroke="#101010" stroke-width="0.7" stroke-linejoin="round"/><path d="M889.2 163.9 L930.5 167.4 L929.8 170.3 L889.2 168.2Z" fill="#ffff00" stroke="#101010" stroke-width="0.7" stroke-linejoin="round"/></g><ellipse cx="891.8" cy="163.1" rx="38.5" ry="17.1" transform="rotate(5 891.8 163.1)" fill="none" stroke="#200000" stroke-width="1"/>
<ellipse cx="893.9" cy="219.5" rx="34.2" ry="15" transform="rotate(0 893.9 219.5)" fill="url(#gGrayE)"/><g clip-path="url(#c6)"><g transform="rotate(0 893.9 219.5)" fill="none" stroke="#151515" stroke-width="0.9"><path d="M891.9 204.5 Q897.3 219.5 893.2 234.5"/><path d="M859.7 218.3 Q893.9 224.7 928.1 218.3"/></g><path d="M894.6 218.6 L894.6 205.2 C897.4 205.7 906.1 206.1 911.7 208.4 C917.2 210.6 925 216.9 927.7 218.6Z" fill="#007c98" stroke="#101010" stroke-width="0.7" stroke-linejoin="round"/><path d="M894.6 219.9 L927.7 219.9 C925.4 221.7 919.3 228.5 913.8 230.8 C908.3 233.2 897.8 233.5 894.6 234Z" fill="#00e4ff" stroke="#101010" stroke-width="0.7" stroke-linejoin="round"/></g><ellipse cx="893.9" cy="219.5" rx="34.2" ry="15" transform="rotate(0 893.9 219.5)" fill="none" stroke="#303030" stroke-width="1"/>
<ellipse cx="783.4" cy="193.4" rx="33.1" ry="15" transform="rotate(-40 783.4 193.4)" fill="url(#gRed)"/><g clip-path="url(#c7)"><g transform="rotate(-40 783.4 193.4)" fill="none" stroke="#151515" stroke-width="0.9"><path d="M781.4 178.5 Q786.7 193.4 782.8 208.4"/><path d="M750.3 192.2 Q783.4 198.7 816.6 192.2"/></g><path d="M785.1 196.6 L775.3 183.4 C778.4 181.5 788.3 174.2 794.1 172.1 C799.9 169.9 807.1 169.6 810.1 170.3 C813.2 171.1 811.9 175.3 812.3 176.3Z" fill="#dcd400" stroke="#101010" stroke-width="0.7" stroke-linejoin="round"/><path d="M775.3 183.4 L778.1 182.7 L786 193.9 L785.1 196.6Z" fill="#ffff80" stroke="#101010" stroke-width="0.7" stroke-linejoin="round"/></g><ellipse cx="783.4" cy="193.4" rx="33.1" ry="15" transform="rotate(-40 783.4 193.4)" fill="none" stroke="#200000" stroke-width="1"/>
<ellipse cx="825.1" cy="230.8" rx="25.6" ry="18.8" transform="rotate(-15 825.1 230.8)" fill="url(#gGrayE)"/><g clip-path="url(#c8)"><g transform="rotate(-15 825.1 230.8)" fill="none" stroke="#151515" stroke-width="0.9"><path d="M823.6 212 Q827.7 230.8 824.6 249.6"/><path d="M799.5 229.3 Q825.1 237.4 850.8 229.3"/></g><path d="M823.6 231.5 L849.3 222.9 L849.7 225.5 L825.1 234Z" fill="#007c98" stroke="#101010" stroke-width="0.7" stroke-linejoin="round"/><path d="M825.1 234 L849.7 225.5 C849 228 848.6 236.7 845.4 240.4 C842.2 244.2 832.9 246.7 830.4 247.9Z" fill="#00b4e8" stroke="#101010" stroke-width="0.7" stroke-linejoin="round"/></g><ellipse cx="825.1" cy="230.8" rx="25.6" ry="18.8" transform="rotate(-15 825.1 230.8)" fill="none" stroke="#303030" stroke-width="1"/>
<ellipse cx="969.5" cy="234" rx="26.1" ry="17.5" transform="rotate(15 969.5 234)" fill="url(#gGrayE)"/><g clip-path="url(#c9)"><g transform="rotate(15 969.5 234)" fill="none" stroke="#151515" stroke-width="0.9"><path d="M967.9 216.5 Q972.1 234 969 251.6"/><path d="M943.4 232.6 Q969.5 240.2 995.6 232.6"/></g><path d="M968 234 L970.8 218 C973 219.3 980 221.7 984 225.5 C988.1 229.2 993.3 238 995.2 240.4Z" fill="#007c98" stroke="#101010" stroke-width="0.7" stroke-linejoin="round"/><path d="M968 234 L995.2 240.4 C992.9 241.9 987.1 247.9 981.9 249 C976.7 250.1 966.8 247.2 963.7 246.9Z" fill="#00e4ff" stroke="#101010" stroke-width="0.7" stroke-linejoin="round"/><path d="M968 234 L963.7 246.9 Q963 237.1 965.2 225.5Z" fill="#00b4e8" stroke="#101010" stroke-width="0.7" stroke-linejoin="round"/></g><ellipse cx="969.5" cy="234" rx="26.1" ry="17.5" transform="rotate(15 969.5 234)" fill="none" stroke="#303030" stroke-width="1"/>
<ellipse cx="1009.7" cy="194.5" rx="31" ry="18.2" transform="rotate(35 1009.7 194.5)" fill="url(#gRed)"/><g clip-path="url(#c10)"><g transform="rotate(35 1009.7 194.5)" fill="none" stroke="#151515" stroke-width="0.9"><path d="M1007.8 176.3 Q1012.8 194.5 1009.1 212.7"/><path d="M978.7 193 Q1009.7 200.9 1040.7 193"/></g><path d="M1001.6 193.4 L1018.7 182.3 C1020.7 184.3 1027.8 189.4 1031.1 194.5 C1034.3 199.6 1036.8 209.6 1037.9 212.7Z" fill="#dcd400" stroke="#101010" stroke-width="0.7" stroke-linejoin="round"/><path d="M1001.6 193.4 L1012.2 183.8 Q1021.3 178.7 1018.7 182.3Z" fill="#a89c00" stroke="#101010" stroke-width="0.7" stroke-linejoin="round"/><path d="M1001.6 193.4 L1037.9 212.7 L1036.6 214.4 L1000.3 196Z" fill="#ffff00" stroke="#101010" stroke-width="0.7" stroke-linejoin="round"/></g><ellipse cx="1009.7" cy="194.5" rx="31" ry="18.2" transform="rotate(35 1009.7 194.5)" fill="none" stroke="#200000" stroke-width="1"/>
<ellipse cx="1033.8" cy="314.9" rx="28.9" ry="18.7" transform="rotate(52 1033.8 314.9)" fill="url(#gMag)"/><g clip-path="url(#c11)"><path d="M1033.8 314.4 L1050.1 338.4 C1048.3 338.5 1045 341.2 1039.7 338.9 C1034.4 336.7 1021.6 327.4 1018 325Z" fill="#00e4ff" stroke="#101010" stroke-width="0.7" stroke-linejoin="round"/><path d="M1033.8 314.4 L1042.6 307.2 C1044.3 310.3 1051.2 320.7 1052.8 325.6 C1054.5 330.4 1052.7 334.1 1052.2 336.3 C1051.7 338.4 1050.4 338 1050.1 338.4Z" fill="#007080" stroke="#101010" stroke-width="0.7" stroke-linejoin="round"/></g><ellipse cx="1033.8" cy="314.9" rx="28.9" ry="18.7" transform="rotate(52 1033.8 314.9)" fill="none" stroke="#800080" stroke-width="1"/>
<ellipse cx="751.3" cy="302.7" rx="20.8" ry="19.3" transform="rotate(0 751.3 302.7)" fill="url(#gRed)"/><g clip-path="url(#c12)"><g transform="rotate(0 751.3 302.7)" fill="none" stroke="#151515" stroke-width="0.9"><path d="M750.1 283.4 Q753.4 302.7 750.9 322.1"/><path d="M730.5 301.2 Q751.3 309.5 772.1 301.2"/></g><path d="M751.3 303.2 L741 294.4 C743.2 293.8 749.2 290.4 753.9 290.8 C758.6 291.1 766.5 295.5 769.1 296.5Z" fill="#948c00" stroke="#101010" stroke-width="0.7" stroke-linejoin="round"/><path d="M751.2 303.5 L749.2 318.4 C748.2 316.8 744.7 312.4 743.3 308.4 C741.9 304.5 741.2 297.2 740.8 294.9Z" fill="#ffff00" stroke="#101010" stroke-width="0.7" stroke-linejoin="round"/><path d="M751.5 303.5 L769.1 296.8 C768 298.9 765.7 305.9 762.4 309.5 C759.2 313.1 751.7 316.9 749.5 318.4Z" fill="#ccc400" stroke="#101010" stroke-width="0.7" stroke-linejoin="round"/></g><ellipse cx="751.3" cy="302.7" rx="20.8" ry="19.3" transform="rotate(0 751.3 302.7)" fill="none" stroke="#200000" stroke-width="1"/>
<ellipse cx="806.4" cy="313.1" rx="20.4" ry="20.4" transform="rotate(0 806.4 313.1)" fill="url(#gGrayE)"/><g clip-path="url(#c13)"><g transform="rotate(0 806.4 313.1)" fill="none" stroke="#151515" stroke-width="0.9"><path d="M805.1 292.8 Q808.4 313.1 806 333.5"/><path d="M786 311.5 Q806.4 320.2 826.7 311.5"/></g><path d="M806.7 311.8 L786.4 311.8 C787.4 310.2 789.1 304.5 792.3 302.2 C795.6 299.9 803.8 298.6 806.1 297.8Z" fill="#007c98" stroke="#101010" stroke-width="0.7" stroke-linejoin="round"/><path d="M806.7 313.6 L807.4 326.9 C805.6 326.5 799.7 325.5 796.5 324.2 C793.3 322.9 789.9 320.6 788.2 319 C786.5 317.4 786.5 315.4 786.1 314.7Z" fill="#00e4ff" stroke="#101010" stroke-width="0.7" stroke-linejoin="round"/></g><ellipse cx="806.4" cy="313.1" rx="20.4" ry="20.4" transform="rotate(0 806.4 313.1)" fill="none" stroke="#303030" stroke-width="1"/>
<line x1="796.5" y1="312.6" x2="806.4" y2="312.1" stroke="#a85400" stroke-width="2.4" stroke-linecap="round"/>
<line x1="796.5" y1="312.6" x2="806.4" y2="312.1" stroke="#e27808" stroke-width="1.1" stroke-linecap="round"/>
<line x1="796.5" y1="312.6" x2="806.4" y2="312.1" stroke="#ff9a1c" stroke-width="0.6" stroke-linecap="round"/>
<line x1="826.9" y1="312.1" x2="883.7" y2="312.3" stroke="#a85400" stroke-width="4.7" stroke-linecap="round"/>
<line x1="826.9" y1="312.1" x2="883.7" y2="312.3" stroke="#e27808" stroke-width="3.4" stroke-linecap="round"/>
<line x1="826.9" y1="312.1" x2="883.7" y2="312.3" stroke="#ff9a1c" stroke-width="1.5" stroke-linecap="round"/>
<ellipse cx="896.5" cy="293.7" rx="19" ry="12.9" transform="rotate(0 896.5 293.7)" fill="url(#gCyan)"/><g clip-path="url(#c14)"><path d="M895.5 289.8 L914.5 289.8 C914.4 291.3 916.8 296.7 913.6 298.9 C910.4 301 898.5 302.1 895.5 302.7Z" fill="#00b4e8" stroke="#101010" stroke-width="0.7" stroke-linejoin="round"/><path d="M895.5 290.9 L895.5 288.4 C898.5 288.3 910.4 287.1 913.6 287.5 C916.8 287.8 914.4 290 914.5 290.5Z" fill="#007c98" stroke="#101010" stroke-width="0.7" stroke-linejoin="round"/></g><ellipse cx="896.5" cy="293.7" rx="19" ry="12.9" transform="rotate(0 896.5 293.7)" fill="none" stroke="#0094b4" stroke-width="1"/>
<line x1="843.3" y1="246.5" x2="887" y2="284.1" stroke="#a85400" stroke-width="4.7" stroke-linecap="round"/>
<line x1="843.3" y1="246.5" x2="887" y2="284.1" stroke="#e27808" stroke-width="3.4" stroke-linecap="round"/>
<line x1="843.3" y1="246.5" x2="887" y2="284.1" stroke="#ff9a1c" stroke-width="1.5" stroke-linecap="round"/>
<line x1="950.1" y1="249.8" x2="909.8" y2="282.7" stroke="#a85400" stroke-width="4.7" stroke-linecap="round"/>
<line x1="950.1" y1="249.8" x2="909.8" y2="282.7" stroke="#e27808" stroke-width="3.4" stroke-linecap="round"/>
<line x1="950.1" y1="249.8" x2="909.8" y2="282.7" stroke="#ff9a1c" stroke-width="1.5" stroke-linecap="round"/>
<ellipse cx="891.7" cy="309.4" rx="20.5" ry="11.8" transform="rotate(0 891.7 309.4)" fill="url(#gCyan)"/><g clip-path="url(#c15)"><path d="M891.7 310.3 L891.7 302.7 C894.1 303 902.7 302.7 906 304.6 C909.3 306.5 910.7 312.5 911.7 314.1Z" fill="#007c98" stroke="#101010" stroke-width="0.7" stroke-linejoin="round"/><path d="M891.7 310.7 L911.7 314.5 C911.4 315.4 913.1 319.2 909.8 319.8 C906.5 320.4 894.7 318.2 891.7 317.9Z" fill="#00b4e8" stroke="#101010" stroke-width="0.7" stroke-linejoin="round"/></g><ellipse cx="891.7" cy="309.4" rx="20.5" ry="11.8" transform="rotate(0 891.7 309.4)" fill="none" stroke="#0094b4" stroke-width="1"/>
<line x1="893.5" y1="234.5" x2="891.2" y2="316" stroke="#a85400" stroke-width="4.7" stroke-linecap="round"/>
<line x1="893.5" y1="234.5" x2="891.2" y2="316" stroke="#e27808" stroke-width="3.4" stroke-linecap="round"/>
<line x1="893.5" y1="234.5" x2="891.2" y2="316" stroke="#ff9a1c" stroke-width="1.5" stroke-linecap="round"/>
<ellipse cx="884.7" cy="337.8" rx="38.9" ry="19.9" transform="rotate(5 884.7 337.8)" fill="url(#gRed)"/><g clip-path="url(#c16)"><g transform="rotate(5 884.7 337.8)" fill="none" stroke="#151515" stroke-width="0.9"><path d="M882.4 317.9 Q888.6 337.8 883.9 357.8"/><path d="M845.8 336.2 Q884.7 344.8 923.7 336.2"/></g><path d="M885.5 338.8 L886.4 318.6 C889 319.2 897.3 319.6 902.2 321.7 C907 323.8 911.9 327.7 915.5 331.2 C919 334.7 922.1 340.7 923.5 342.6Z" fill="#f4f000" stroke="#101010" stroke-width="0.7" stroke-linejoin="round"/></g><ellipse cx="884.7" cy="337.8" rx="38.9" ry="19.9" transform="rotate(5 884.7 337.8)" fill="none" stroke="#200000" stroke-width="1"/>
<ellipse cx="892.7" cy="374.9" rx="16.7" ry="13.3" transform="rotate(0 892.7 374.9)" fill="url(#gGrayE)"/><g clip-path="url(#c17)"><g transform="rotate(0 892.7 374.9)" fill="none" stroke="#151515" stroke-width="0.9"><path d="M891.7 361.6 Q894.4 374.9 892.4 388.2"/><path d="M876 373.8 Q892.7 379.5 909.4 373.8"/></g></g><ellipse cx="892.7" cy="374.9" rx="16.7" ry="13.3" transform="rotate(0 892.7 374.9)" fill="none" stroke="#303030" stroke-width="1"/>
<ellipse cx="686.1" cy="409.3" rx="16" ry="41" transform="rotate(8 686.1 409.3)" fill="url(#gRed)"/><g clip-path="url(#c18)"><g transform="rotate(8 686.1 409.3)" fill="none" stroke="#151515" stroke-width="0.9"><path d="M685.1 368.3 Q687.7 409.3 685.8 450.4"/><path d="M670 406.1 Q686.1 423.7 702.1 406.1"/></g><path d="M685.9 408.9 L673.3 406.6 C674.5 405.9 678.1 403.4 680.8 402.5 C683.5 401.6 687.2 401 689.7 401 C692.2 401 694.8 402.3 695.9 402.5Z" fill="#a89c00" stroke="#101010" stroke-width="0.7" stroke-linejoin="round"/><path d="M685.9 409.2 L680.4 448.8 C679.4 446.1 675.7 437.8 674.3 432.4 C672.8 427.1 672.1 421.3 671.9 417 C671.7 412.7 672.9 408.5 673.1 406.8Z" fill="#ffff80" stroke="#101010" stroke-width="0.7" stroke-linejoin="round"/><path d="M686.1 409.2 L695.9 402.8 C695.7 405.5 695.9 413.6 694.7 419.4 C693.5 425.1 690.8 432.3 688.5 437.2 C686.2 442.1 682 446.9 680.7 448.8Z" fill="#a8a000" stroke="#101010" stroke-width="0.7" stroke-linejoin="round"/></g><ellipse cx="686.1" cy="409.3" rx="16" ry="41" transform="rotate(8 686.1 409.3)" fill="none" stroke="#200000" stroke-width="1"/>
<ellipse cx="736.5" cy="407.6" rx="13.9" ry="29.9" transform="rotate(8 736.5 407.6)" fill="url(#gGrayE)"/><g clip-path="url(#c19)"><g transform="rotate(8 736.5 407.6)" fill="none" stroke="#151515" stroke-width="0.9"><path d="M735.7 377.7 Q737.9 407.6 736.2 437.5"/><path d="M722.6 405.2 Q736.5 418.1 750.4 405.2"/></g><path d="M736 408.1 L723.2 405.8 C724.5 405.4 727.9 403.7 731.3 403.2 C734.6 402.8 741.2 403.2 743.1 403.2Z" fill="#007c98" stroke="#101010" stroke-width="0.7" stroke-linejoin="round"/><path d="M736 408.5 L732.2 436.6 C731 434.6 726.3 428.6 724.7 424.7 C723.1 420.9 722.8 416.5 722.5 413.4 C722.2 410.4 722.9 407.5 722.9 406.3Z" fill="#d4ffff" stroke="#101010" stroke-width="0.7" stroke-linejoin="round"/><path d="M736 408.5 L743.4 403.7 C743.2 405.9 743.1 412.4 742.2 417 C741.3 421.6 739.4 428 737.8 431.3 C736.2 434.5 733.3 435.7 732.4 436.6Z" fill="#0084ac" stroke="#101010" stroke-width="0.7" stroke-linejoin="round"/></g><ellipse cx="736.5" cy="407.6" rx="13.9" ry="29.9" transform="rotate(8 736.5 407.6)" fill="none" stroke="#303030" stroke-width="1"/>
<line x1="701.6" y1="408.1" x2="735.1" y2="408.7" stroke="#a85400" stroke-width="4" stroke-linecap="round"/>
<line x1="701.6" y1="408.1" x2="735.1" y2="408.7" stroke="#e27808" stroke-width="2.7" stroke-linecap="round"/>
<line x1="701.6" y1="408.1" x2="735.1" y2="408.7" stroke="#ff9a1c" stroke-width="0.8" stroke-linecap="round"/>
<ellipse cx="788.6" cy="375.6" rx="31.1" ry="25.2" transform="rotate(38 788.6 375.6)" fill="url(#gRed)"/><g clip-path="url(#c20)"><path d="M785.6 373.3 L761.9 359.6 C762.9 359.5 764.8 358.3 767.8 359 C770.8 359.7 776.3 362 779.7 363.8 C783.1 365.5 786.8 368.5 788.2 369.5Z" fill="#a89c00" stroke="#101010" stroke-width="0.7" stroke-linejoin="round"/><path d="M785.6 373.5 L778.5 399.6 C776.7 398 770.7 394.1 767.8 389.9 C764.9 385.7 761.9 379.4 760.9 374.4 C759.9 369.5 761.7 362.4 761.9 360Z" fill="#ffff00" stroke="#101010" stroke-width="0.7" stroke-linejoin="round"/><path d="M785.6 373.7 L787.1 392.3 L778.7 399.6Z" fill="#a89c00" stroke="#101010" stroke-width="0.7" stroke-linejoin="round"/><path d="M803.2 354 Q805.2 361.4 802 369.1" stroke="#101010" fill="none" stroke-width=".8"/></g><ellipse cx="788.6" cy="375.6" rx="31.1" ry="25.2" transform="rotate(38 788.6 375.6)" fill="none" stroke="#200000" stroke-width="1"/>
<ellipse cx="803.2" cy="391.3" rx="25.5" ry="13.3" transform="rotate(50 803.2 391.3)" fill="url(#gGrayE)"/><g clip-path="url(#c21)"><path d="M802.9 393.7 L801.3 402 C800.1 400.4 796.2 395.9 794.2 392.3 C792.2 388.7 790.4 383.8 789.4 380.4 C788.5 377 788.7 373.3 788.6 371.8Z" fill="#00e4ff" stroke="#101010" stroke-width="0.7" stroke-linejoin="round"/><path d="M802.9 393.4 L789.2 371.4 C791 371.9 796.5 372.7 799.9 374.4 C803.2 376.1 806.9 379.3 809.4 381.6 C811.9 383.8 813.9 387 814.8 388.1Z" fill="#007c98" stroke="#101010" stroke-width="0.7" stroke-linejoin="round"/><path d="M803 394 L815.1 388.5 C814.3 389.7 812.8 393.8 810.6 396.1 C808.4 398.3 803.2 401 801.8 402Z" fill="#00b4e8" stroke="#101010" stroke-width="0.7" stroke-linejoin="round"/></g><ellipse cx="803.2" cy="391.3" rx="25.5" ry="13.3" transform="rotate(50 803.2 391.3)" fill="none" stroke="#303030" stroke-width="1"/>
<line x1="803.7" y1="394" x2="822.4" y2="416" stroke="#a85400" stroke-width="3.6" stroke-linecap="round"/>
<line x1="803.7" y1="394" x2="822.4" y2="416" stroke="#e27808" stroke-width="2.3" stroke-linecap="round"/>
<line x1="803.7" y1="394" x2="822.4" y2="416" stroke="#ff9a1c" stroke-width="0.6" stroke-linecap="round"/>
<ellipse cx="825.1" cy="419.3" rx="13.7" ry="15.4" transform="rotate(0 825.1 419.3)" fill="url(#gCyan)"/><g clip-path="url(#c22)"><path d="M826 419.1 L816.5 411 C818.1 411.4 822.9 411.8 826 413 C829.1 414.3 833.5 417.7 835 418.6Z" fill="#007c98" stroke="#101010" stroke-width="0.7" stroke-linejoin="round"/><path d="M826 419.3 L818.9 431.7 C818.2 430.1 815.4 425.1 814.7 421.9 C814.1 418.8 815 414.2 815.1 412.7Z" fill="#00b4e8" stroke="#101010" stroke-width="0.7" stroke-linejoin="round"/><path d="M826 419.6 L835 419.3 C834.1 421 832.1 426.9 829.6 429.1 C827 431.2 821.3 431.6 819.6 432.2Z" fill="#009cc8" stroke="#101010" stroke-width="0.7" stroke-linejoin="round"/></g><ellipse cx="825.1" cy="419.3" rx="13.7" ry="15.4" transform="rotate(0 825.1 419.3)" fill="none" stroke="#0094b4" stroke-width="1"/>
<line x1="822.4" y1="419" x2="827.2" y2="418.6" stroke="#a85400" stroke-width="2.6" stroke-linecap="round"/>
<line x1="822.4" y1="419" x2="827.2" y2="418.6" stroke="#e27808" stroke-width="1.3" stroke-linecap="round"/>
<line x1="822.4" y1="419" x2="827.2" y2="418.6" stroke="#ff9a1c" stroke-width="0.6" stroke-linecap="round"/>
<ellipse cx="766.6" cy="470.3" rx="17" ry="24.3" transform="rotate(-5 766.6 470.3)" fill="url(#gRed)"/><g clip-path="url(#c23)"><g transform="rotate(-5 766.6 470.3)" fill="none" stroke="#151515" stroke-width="0.9"><path d="M765.6 445.9 Q768.3 470.3 766.3 494.6"/><path d="M749.6 468.3 Q766.6 478.8 783.6 468.3"/></g><path d="M766.6 470.3 L752.6 468.7 C754.4 467 759.5 460.8 763.1 458.4 C766.6 456 772 455.1 773.8 454.5Z" fill="#a89c00" stroke="#101010" stroke-width="0.7" stroke-linejoin="round"/><path d="M766.7 470.3 L774.2 454.8 C774.7 457.5 776.9 465.4 776.8 470.9 C776.8 476.3 774.3 484.7 773.8 487.5Z" fill="#989000" stroke="#101010" stroke-width="0.7" stroke-linejoin="round"/><path d="M766.5 470.6 L773.5 487.7 C771.4 486.6 764.2 484 760.7 481 C757.2 478 754 471.6 752.6 469.7Z" fill="#ffff00" stroke="#101010" stroke-width="0.7" stroke-linejoin="round"/></g><ellipse cx="766.6" cy="470.3" rx="17" ry="24.3" transform="rotate(-5 766.6 470.3)" fill="none" stroke="#200000" stroke-width="1"/>
<ellipse cx="814.1" cy="465.2" rx="14.3" ry="19.6" transform="rotate(15 814.1 465.2)" fill="url(#gGrayE)"/><g clip-path="url(#c24)"><g transform="rotate(15 814.1 465.2)" fill="none" stroke="#151515" stroke-width="0.9"><path d="M813.3 445.6 Q815.6 465.2 813.8 484.8"/><path d="M799.9 463.6 Q814.1 472 828.4 463.6"/></g><path d="M814.4 464.3 L801.1 461.4 C802.1 459.8 803.8 454.4 807 451.9 C810.2 449.4 818.1 447.4 820.3 446.5Z" fill="#00b4e8" stroke="#101010" stroke-width="0.7" stroke-linejoin="round"/><path d="M801.1 461.9 L814.7 464.5 L814.1 465.9 L801.3 463.3Z" fill="#007c98" stroke="#101010" stroke-width="0.7" stroke-linejoin="round"/></g><ellipse cx="814.1" cy="465.2" rx="14.3" ry="19.6" transform="rotate(15 814.1 465.2)" fill="none" stroke="#303030" stroke-width="1"/>
<ellipse cx="888" cy="454.7" rx="14.4" ry="14.1" transform="rotate(0 888 454.7)" fill="url(#gCyan)"/><g clip-path="url(#c25)"><path d="M888 455.2 L877.4 455.3 C878 454.5 879.8 451.7 881.4 450.4 C882.9 449.1 885.8 447.9 886.7 447.4Z" fill="#0088a8" stroke="#101010" stroke-width="0.7" stroke-linejoin="round"/><path d="M888.2 455.2 L886.9 447.4 L891.8 454.2 L893.9 461Z" fill="#006484" stroke="#101010" stroke-width="0.7" stroke-linejoin="round"/><path d="M888 455.7 L894.3 462 C893.5 462.8 892.1 466 889.9 466.6 C887.8 467.2 883.7 466.7 881.4 465.6 C879 464.5 876.9 460.9 876 459.9Z" fill="#00e8ff" stroke="#101010" stroke-width="0.7" stroke-linejoin="round"/></g><ellipse cx="888" cy="454.7" rx="14.4" ry="14.1" transform="rotate(0 888 454.7)" fill="none" stroke="#0094b4" stroke-width="1"/>
<line x1="872.8" y1="457.2" x2="887.8" y2="455.2" stroke="#a85400" stroke-width="3.6" stroke-linecap="round"/>
<line x1="872.8" y1="457.2" x2="887.8" y2="455.2" stroke="#e27808" stroke-width="2.3" stroke-linecap="round"/>
<line x1="872.8" y1="457.2" x2="887.8" y2="455.2" stroke="#ff9a1c" stroke-width="0.6" stroke-linecap="round"/>
<line x1="896.7" y1="456.7" x2="907" y2="458.2" stroke="#a85400" stroke-width="4" stroke-linecap="round"/>
<line x1="896.7" y1="456.7" x2="907" y2="458.2" stroke="#e27808" stroke-width="2.7" stroke-linecap="round"/>
<line x1="896.7" y1="456.7" x2="907" y2="458.2" stroke="#ff9a1c" stroke-width="0.8" stroke-linecap="round"/>
<ellipse cx="992.7" cy="399.7" rx="24.3" ry="22" transform="rotate(-30 992.7 399.7)" fill="url(#gRed)"/><g clip-path="url(#c26)"><path d="M996 397.6 L1011.9 385.2 L1015.7 394.9 L1013.1 409.2 L1003.6 416.6 L996.3 409.2Z" fill="#dcd400" stroke="#101010" stroke-width="0.7" stroke-linejoin="round"/><path d="M995.1 394.3 L1010.8 384.8 L1011.9 386.6 L996 397.6Z" fill="#a89c00" stroke="#101010" stroke-width="0.7" stroke-linejoin="round"/><path d="M979.3 381.9 Q979.9 387.8 982.3 390.2" stroke="#101010" fill="none" stroke-width=".8"/></g><ellipse cx="992.7" cy="399.7" rx="24.3" ry="22" transform="rotate(-30 992.7 399.7)" fill="none" stroke="#200000" stroke-width="1"/>
<ellipse cx="980.5" cy="402.3" rx="18.4" ry="12.8" transform="rotate(-35 980.5 402.3)" fill="url(#gGrayE)"/><g clip-path="url(#c27)"><g transform="rotate(-35 980.5 402.3)" fill="none" stroke="#151515" stroke-width="0.9"><path d="M979.4 389.5 Q982.3 402.3 980.1 415.1"/><path d="M962.1 401.3 Q980.5 406.8 998.9 401.3"/></g><path d="M973.9 410.4 L979.9 409.2 L988.2 415.1 L982.3 422.3 L975.1 421.1Z" fill="#00e4ff" stroke="#101010" stroke-width="0.7" stroke-linejoin="round"/><path d="M978.7 408.6 L980.5 407.1 L988.2 413 L987 414.9Z" fill="#007c98" stroke="#101010" stroke-width="0.7" stroke-linejoin="round"/></g><ellipse cx="980.5" cy="402.3" rx="18.4" ry="12.8" transform="rotate(-35 980.5 402.3)" fill="none" stroke="#303030" stroke-width="1"/>
<ellipse cx="961.5" cy="422.3" rx="13.4" ry="16.6" transform="rotate(18 961.5 422.3)" fill="url(#gCyan)"/><g clip-path="url(#c28)"><path d="M961.8 424 L969.2 420.5 C968.6 422 967.6 426.6 965.6 429.4 C963.6 432.2 958.5 435.8 957.1 437.1Z" fill="#007c98" stroke="#101010" stroke-width="0.7" stroke-linejoin="round"/><path d="M961.6 424.3 L956.8 437.1 C955.6 435.4 950.7 430.3 949.6 427 C948.5 423.7 950.1 419.1 950.2 417.5Z" fill="#00b4e8" stroke="#101010" stroke-width="0.7" stroke-linejoin="round"/><path d="M962.1 424.3 L969.4 420.8 C969.6 422.3 972.4 426.6 970.4 429.4 C968.4 432.1 959.7 436 957.6 437.3Z" fill="#00c8ee" stroke="#101010" stroke-width="0.7" stroke-linejoin="round"/></g><ellipse cx="961.5" cy="422.3" rx="13.4" ry="16.6" transform="rotate(18 961.5 422.3)" fill="none" stroke="#0094b4" stroke-width="1"/>
<line x1="907.4" y1="383" x2="961.1" y2="423.7" stroke="#a85400" stroke-width="3.6" stroke-linecap="round"/>
<line x1="907.4" y1="383" x2="961.1" y2="423.7" stroke="#e27808" stroke-width="2.3" stroke-linecap="round"/>
<line x1="907.4" y1="383" x2="961.1" y2="423.7" stroke="#ff9a1c" stroke-width="0.6" stroke-linecap="round"/>
<line x1="975.7" y1="418.9" x2="1037.3" y2="402.2" stroke="#a85400" stroke-width="4" stroke-linecap="round"/>
<line x1="975.7" y1="418.9" x2="1037.3" y2="402.2" stroke="#e27808" stroke-width="2.7" stroke-linecap="round"/>
<line x1="975.7" y1="418.9" x2="1037.3" y2="402.2" stroke="#ff9a1c" stroke-width="0.8" stroke-linecap="round"/>
<ellipse cx="1049.8" cy="400.8" rx="13.7" ry="24.3" transform="rotate(-15 1049.8 400.8)" fill="url(#gGrayE)"/><g clip-path="url(#c29)"><g transform="rotate(-15 1049.8 400.8)" fill="none" stroke="#151515" stroke-width="0.9"><path d="M1048.9 376.5 Q1051.1 400.8 1049.5 425.2"/><path d="M1036.1 398.9 Q1049.8 409.3 1063.4 398.9"/></g><path d="M1047.6 397.7 L1041.4 380 C1043.5 381.1 1050.3 383.5 1053.6 386.6 C1056.8 389.6 1059.9 396.5 1061.2 398.4Z" fill="#007c98" stroke="#101010" stroke-width="0.7" stroke-linejoin="round"/><path d="M1047.4 398 L1043.8 411.7 C1043.3 410.1 1041.1 407 1040.5 402 C1039.9 397.1 1040.1 385.4 1040 382.1Z" fill="#00e4ff" stroke="#101010" stroke-width="0.7" stroke-linejoin="round"/><path d="M1047.6 398.3 L1061.2 399.2 C1059.9 400.6 1056.4 405.8 1053.6 407.9 C1050.7 410.1 1045.8 411.2 1044.3 411.9Z" fill="#00b4e8" stroke="#101010" stroke-width="0.7" stroke-linejoin="round"/></g><ellipse cx="1049.8" cy="400.8" rx="13.7" ry="24.3" transform="rotate(-15 1049.8 400.8)" fill="none" stroke="#303030" stroke-width="1"/>
<line x1="1048" y1="399.9" x2="1061.6" y2="398.2" stroke="#a85400" stroke-width="2.8" stroke-linecap="round"/>
<line x1="1048" y1="399.9" x2="1061.6" y2="398.2" stroke="#e27808" stroke-width="1.5" stroke-linecap="round"/>
<line x1="1048" y1="399.9" x2="1061.6" y2="398.2" stroke="#ff9a1c" stroke-width="0.6" stroke-linecap="round"/>
<ellipse cx="1104.4" cy="389.5" rx="17.8" ry="35" transform="rotate(-8 1104.4 389.5)" fill="url(#gRed)"/><g clip-path="url(#c30)"><g transform="rotate(-8 1104.4 389.5)" fill="none" stroke="#151515" stroke-width="0.9"><path d="M1103.3 354.5 Q1106.2 389.5 1104 424.6"/><path d="M1086.6 386.7 Q1104.4 401.8 1122.2 386.7"/></g><path d="M1103.2 389.5 L1093.9 377.1 C1096.3 377.5 1103.6 377.4 1107.9 379.4 C1112.3 381.5 1117.8 387.6 1119.8 389.2Z" fill="#8c8400" stroke="#101010" stroke-width="0.7" stroke-linejoin="round"/><path d="M1103.1 389.9 L1102 421.2 C1101 418.4 1097.5 411.6 1096.1 404.4 C1094.6 397.1 1093.7 382.1 1093.2 377.7Z" fill="#ffff00" stroke="#101010" stroke-width="0.7" stroke-linejoin="round"/><path d="M1103.4 389.9 L1119.8 389.7 C1118.9 393.3 1117 406.2 1114.1 411.5 C1111.2 416.8 1104.3 419.7 1102.4 421.4Z" fill="#f2f000" stroke="#101010" stroke-width="0.7" stroke-linejoin="round"/></g><ellipse cx="1104.4" cy="389.5" rx="17.8" ry="35" transform="rotate(-8 1104.4 389.5)" fill="none" stroke="#200000" stroke-width="1"/>
<ellipse cx="952.7" cy="467.4" rx="19.6" ry="17.8" transform="rotate(-10 952.7 467.4)" fill="url(#gGrayE)"/><g clip-path="url(#c31)"><g transform="rotate(-10 952.7 467.4)" fill="none" stroke="#151515" stroke-width="0.9"><path d="M951.5 449.6 Q954.6 467.4 952.3 485.2"/><path d="M933.1 466 Q952.7 473.6 972.3 466"/></g><path d="M952.7 467.8 L936.6 476.8 C936.8 474.9 936 469.5 937.8 465.6 C939.7 461.8 946.1 455.7 947.8 453.8Z" fill="#00b4e8" stroke="#101010" stroke-width="0.7" stroke-linejoin="round"/><path d="M952.7 467.8 L948.5 453.8 C950.3 455.1 956.9 459 959.2 461.8 C961.5 464.6 961.8 469.2 962.3 470.6Z" fill="#007c98" stroke="#101010" stroke-width="0.7" stroke-linejoin="round"/><path d="M952.7 468.1 L962.5 471.3 C962.2 472 962.7 474.2 960.4 475.4 C958 476.5 952.5 477.7 948.5 478.1 C944.5 478.5 938.6 477.6 936.6 477.5Z" fill="#00c4f4" stroke="#101010" stroke-width="0.7" stroke-linejoin="round"/></g><ellipse cx="952.7" cy="467.4" rx="19.6" ry="17.8" transform="rotate(-10 952.7 467.4)" fill="none" stroke="#303030" stroke-width="1"/>
<line x1="953.3" y1="467.8" x2="972.3" y2="469.4" stroke="#a85400" stroke-width="3.4" stroke-linecap="round"/>
<line x1="953.3" y1="467.8" x2="972.3" y2="469.4" stroke="#e27808" stroke-width="2.1" stroke-linecap="round"/>
<line x1="953.3" y1="467.8" x2="972.3" y2="469.4" stroke="#ff9a1c" stroke-width="0.6" stroke-linecap="round"/>
<ellipse cx="991.5" cy="473.3" rx="18.8" ry="28" transform="rotate(25 991.5 473.3)" fill="url(#gRed)"/><g clip-path="url(#c32)"><g transform="rotate(25 991.5 473.3)" fill="none" stroke="#151515" stroke-width="0.9"><path d="M990.4 445.3 Q993.4 473.3 991.1 501.4"/><path d="M972.7 471.1 Q991.5 483.2 1010.3 471.1"/></g><path d="M990.1 474.5 L983.9 461.1 C985.9 462 992.4 463.8 996 466.2 C999.6 468.7 1003.7 474.2 1005.3 475.8Z" fill="#a89c00" stroke="#101010" stroke-width="0.7" stroke-linejoin="round"/><path d="M990.1 474.9 L978.8 496.2 C978.1 494.4 975.2 490.1 974.9 485.8 C974.6 481.5 975.6 474.4 977 470.4 C978.4 466.3 982.4 463.1 983.4 461.6Z" fill="#ffff00" stroke="#101010" stroke-width="0.7" stroke-linejoin="round"/><path d="M990.1 475.1 L1005.3 476.3 C1004 478.5 1000.8 486 997.8 489.4 C994.8 492.7 990.2 495.4 987.1 496.5 C984 497.7 980.4 496.3 979 496.3Z" fill="#f2f000" stroke="#101010" stroke-width="0.7" stroke-linejoin="round"/></g><ellipse cx="991.5" cy="473.3" rx="18.8" ry="28" transform="rotate(25 991.5 473.3)" fill="none" stroke="#200000" stroke-width="1"/>
<ellipse cx="817.1" cy="510.1" rx="16.6" ry="19.7" transform="rotate(25 817.1 510.1)" fill="url(#gGrayE)"/><g clip-path="url(#c33)"><g transform="rotate(25 817.1 510.1)" fill="none" stroke="#151515" stroke-width="0.9"><path d="M816.1 490.4 Q818.8 510.1 816.8 529.8"/><path d="M800.5 508.5 Q817.1 517 833.7 508.5"/></g><path d="M817.9 509.5 L812.7 495.8 C814.5 496.6 821 498.1 823.6 500.3 C826.2 502.6 827.6 507.8 828.4 509.2Z" fill="#007c98" stroke="#101010" stroke-width="0.7" stroke-linejoin="round"/><path d="M817.7 510.1 L803.7 523.4 C803.2 521.4 800.7 514.9 800.8 511.3 C801 507.7 802.8 504.3 804.6 501.8 C806.5 499.2 810.8 497 812 496.1Z" fill="#00e4ff" stroke="#101010" stroke-width="0.7" stroke-linejoin="round"/><path d="M817.9 510.1 L828.4 509.8 C826.5 511.3 821.2 516.1 817.1 518.4 C813 520.7 806.2 522.6 804 523.5Z" fill="#00b4e8" stroke="#101010" stroke-width="0.7" stroke-linejoin="round"/></g><ellipse cx="817.1" cy="510.1" rx="16.6" ry="19.7" transform="rotate(25 817.1 510.1)" fill="none" stroke="#303030" stroke-width="1"/>
<ellipse cx="807.4" cy="567.1" rx="30.2" ry="19.4" transform="rotate(-5 807.4 567.1)" fill="url(#gRed)"/><g clip-path="url(#c34)"><g transform="rotate(-5 807.4 567.1)" fill="none" stroke="#151515" stroke-width="0.9"><path d="M805.6 547.7 Q810.4 567.1 806.8 586.5"/><path d="M777.2 565.5 Q807.4 573.9 837.6 565.5"/></g><path d="M807.4 567.8 L782.7 572.6 C784.8 570.6 790.2 563.6 794.9 560.2 C799.6 556.7 808.2 553.2 810.9 551.9Z" fill="#dcd400" stroke="#101010" stroke-width="0.7" stroke-linejoin="round"/><path d="M807.7 567.8 L811 551.9 C812.8 554.2 819.9 561.2 821.9 565.7 C824 570.2 823.1 576.8 823.3 579Z" fill="#8c8400" stroke="#101010" stroke-width="0.7" stroke-linejoin="round"/><path d="M807.4 568.2 L822.9 579.6 C819.4 579.7 808.6 581.5 801.9 580.5 C795.2 579.6 785.9 574.9 782.7 573.7Z" fill="#ffff00" stroke="#101010" stroke-width="0.7" stroke-linejoin="round"/></g><ellipse cx="807.4" cy="567.1" rx="30.2" ry="19.4" transform="rotate(-5 807.4 567.1)" fill="none" stroke="#200000" stroke-width="1"/>
<line x1="810.4" y1="551.2" x2="807.7" y2="567.1" stroke="#a85400" stroke-width="3" stroke-linecap="round"/>
<line x1="810.4" y1="551.2" x2="807.7" y2="567.1" stroke="#e27808" stroke-width="1.7" stroke-linecap="round"/>
<line x1="810.4" y1="551.2" x2="807.7" y2="567.1" stroke="#ff9a1c" stroke-width="0.6" stroke-linecap="round"/>
<ellipse cx="887.1" cy="548.4" rx="24.2" ry="15.9" transform="rotate(0 887.1 548.4)" fill="url(#gGrayE)"/><g clip-path="url(#c35)"><g transform="rotate(0 887.1 548.4)" fill="none" stroke="#151515" stroke-width="0.9"><path d="M885.6 532.5 Q889.5 548.4 886.6 564.3"/><path d="M862.8 547.1 Q887.1 554 911.3 547.1"/></g><path d="M887.7 549.1 L887.7 532.7 C889.8 533.3 896.5 533.4 900.2 535.9 C903.9 538.4 908.3 545.7 909.9 547.7Z" fill="#0090b8" stroke="#101010" stroke-width="0.7" stroke-linejoin="round"/><path d="M886.4 549.4 L910.2 549.6 L907.1 552.7 L886.4 553Z" fill="#00e4ff" stroke="#101010" stroke-width="0.7" stroke-linejoin="round"/></g><ellipse cx="887.1" cy="548.4" rx="24.2" ry="15.9" transform="rotate(0 887.1 548.4)" fill="none" stroke="#303030" stroke-width="1"/>
<line x1="887.2" y1="533.9" x2="887.2" y2="548.4" stroke="#a85400" stroke-width="2.6" stroke-linecap="round"/>
<line x1="887.2" y1="533.9" x2="887.2" y2="548.4" stroke="#e27808" stroke-width="1.3" stroke-linecap="round"/>
<line x1="887.2" y1="533.9" x2="887.2" y2="548.4" stroke="#ff9a1c" stroke-width="0.6" stroke-linecap="round"/>
<ellipse cx="887.7" cy="604.5" rx="30.5" ry="15" transform="rotate(-3 887.7 604.5)" fill="url(#gRed)"/><g clip-path="url(#c36)"><g transform="rotate(-3 887.7 604.5)" fill="none" stroke="#151515" stroke-width="0.9"><path d="M885.9 589.5 Q890.8 604.5 887.1 619.5"/><path d="M857.3 603.3 Q887.7 609.7 918.2 603.3"/></g><path d="M886.4 604.8 L885 590.4 C887.1 590.2 893.1 588.5 897.4 589.3 C901.8 590 908 592.6 911.3 594.8 C914.6 597 916.4 601.2 917.4 602.4Z" fill="#dcd400" stroke="#101010" stroke-width="0.7" stroke-linejoin="round"/><path d="M886.4 603.9 L917.4 601.7 L917.4 603.1 L886.4 606Z" fill="#ffff00" stroke="#101010" stroke-width="0.7" stroke-linejoin="round"/></g><ellipse cx="887.7" cy="604.5" rx="30.5" ry="15" transform="rotate(-3 887.7 604.5)" fill="none" stroke="#200000" stroke-width="1"/>
<line x1="887.5" y1="589.3" x2="888" y2="603.1" stroke="#a85400" stroke-width="3" stroke-linecap="round"/>
<line x1="887.5" y1="589.3" x2="888" y2="603.1" stroke="#e27808" stroke-width="1.7" stroke-linecap="round"/>
<line x1="887.5" y1="589.3" x2="888" y2="603.1" stroke="#ff9a1c" stroke-width="0.6" stroke-linecap="round"/>
<ellipse cx="975.8" cy="513.7" rx="20.8" ry="17.8" transform="rotate(-5 975.8 513.7)" fill="url(#gGrayE)"/><g clip-path="url(#c37)"><g transform="rotate(-5 975.8 513.7)" fill="none" stroke="#151515" stroke-width="0.9"><path d="M974.6 495.9 Q977.9 513.7 975.4 531.5"/><path d="M955 512.3 Q975.8 520 996.6 512.3"/></g><path d="M975.8 514.9 L966.9 508.9 C969.4 508.6 976.9 506.7 981.8 507.2 C986.6 507.7 993.6 511.2 996 511.9Z" fill="#007c98" stroke="#101010" stroke-width="0.7" stroke-linejoin="round"/><path d="M975.7 515.3 L972.9 528.8 C972 527.4 968.5 523.5 967.5 520.3 C966.5 517 966.9 511.2 966.8 509.3Z" fill="#00e4ff" stroke="#101010" stroke-width="0.7" stroke-linejoin="round"/><path d="M975.9 515.3 L996 512.3 C995 514.1 993.8 520.1 990.1 522.9 C986.3 525.6 976.2 527.8 973.4 528.8Z" fill="#0098c4" stroke="#101010" stroke-width="0.7" stroke-linejoin="round"/></g><ellipse cx="975.8" cy="513.7" rx="20.8" ry="17.8" transform="rotate(-5 975.8 513.7)" fill="none" stroke="#303030" stroke-width="1"/>
<ellipse cx="986.3" cy="571.1" rx="23.8" ry="20.9" transform="rotate(-15 986.3 571.1)" fill="url(#gRed)"/><g clip-path="url(#c38)"><g transform="rotate(-15 986.3 571.1)" fill="none" stroke="#151515" stroke-width="0.9"><path d="M984.9 550.2 Q988.7 571.1 985.8 592"/><path d="M962.6 569.4 Q986.3 578.4 1010.1 569.4"/></g><path d="M986.6 570.5 L976.6 558.2 C979 558.4 986.2 557.9 991.1 559.2 C996 560.5 1003.5 564.9 1006 566.1Z" fill="#8c8400" stroke="#101010" stroke-width="0.7" stroke-linejoin="round"/><path d="M986.2 570.8 L978 586.7 C977.2 584.3 973.4 576.8 973 572.3 C972.7 567.7 975.4 561.4 975.9 559.2Z" fill="#ffff00" stroke="#101010" stroke-width="0.7" stroke-linejoin="round"/><path d="M986.6 570.8 L1006 566.6 C1004.3 568.7 1000.5 576 995.8 579.4 C991.2 582.8 981.2 585.6 978.2 586.9Z" fill="#ccc400" stroke="#101010" stroke-width="0.7" stroke-linejoin="round"/></g><ellipse cx="986.3" cy="571.1" rx="23.8" ry="20.9" transform="rotate(-15 986.3 571.1)" fill="none" stroke="#200000" stroke-width="1"/></svg>
<div style="position:absolute;left:1077px;top:482px;width:47px;height:172px;border:1px solid #fff;background:#000040"></div>
<svg style="position:absolute;left:1077px;top:482px;overflow:visible" width="46" height="171"><defs><radialGradient id="lgC" cx=".5" cy=".5" r=".6" fx=".35" fy=".3"><stop offset="0" stop-color="#60f0f0"/><stop offset=".6" stop-color="#10b8c0"/><stop offset="1" stop-color="#087880"/></radialGradient>
<radialGradient id="lgM" cx=".5" cy=".5" r=".6" fx=".35" fy=".3"><stop offset="0" stop-color="#ff60ff"/><stop offset=".6" stop-color="#e000e0"/><stop offset="1" stop-color="#800080"/></radialGradient>
<radialGradient id="lgN" cx=".5" cy=".5" r=".6" fx=".35" fy=".3"><stop offset="0" stop-color="#c0d8f0"/><stop offset=".6" stop-color="#88a8c8"/><stop offset="1" stop-color="#506880"/></radialGradient>
<radialGradient id="lgG" cx=".5" cy=".5" r=".6" fx=".55" fy=".35"><stop offset="0" stop-color="#fff"/><stop offset=".5" stop-color="#d0d0d0"/><stop offset="1" stop-color="#707070"/></radialGradient>
<radialGradient id="lgR" cx=".5" cy=".5" r=".6" fx=".5" fy=".3"><stop offset="0" stop-color="#ff3030"/><stop offset=".6" stop-color="#d80000"/><stop offset="1" stop-color="#700000"/></radialGradient>
<radialGradient id="lgH" cx=".5" cy=".5" r=".6" fx=".6" fy=".4"><stop offset="0" stop-color="#fff"/><stop offset=".6" stop-color="#f0f0f0"/><stop offset="1" stop-color="#909090"/></radialGradient></defs><g transform="translate(0.8 2.3)"><circle cx="7" cy="7.500" r="7" fill="url(#lgC)"/><path d="M7.500 7.500V1A6.500 6.500 0 0 1 14 8.500H7.500Z" fill="#00e4ff"/><path d="M7.500 1.500V8.500H13.800" stroke="#006080" stroke-width="1.300" fill="none"/><path d="M3.500 10H9" stroke="#101010" stroke-width="1"/></g><g transform="translate(0.8 21.35)"><circle cx="7" cy="7.500" r="7" fill="url(#lgM)"/><path d="M7.500 7.500V1A6.500 6.500 0 0 1 14 8.500H7.500Z" fill="#00e4ff"/><path d="M7.500 1.500V8.500H13.800" stroke="#006080" stroke-width="1.300" fill="none"/><path d="M3.500 10H9" stroke="#101010" stroke-width="1"/></g><g transform="translate(0.8 40.4)"><circle cx="7" cy="7.500" r="7" fill="url(#lgN)"/><path d="M7.500 7.500V1A6.500 6.500 0 0 1 14 8.500H7.500Z" fill="#00e4ff"/><path d="M7.500 1.500V8.500H13.800" stroke="#006080" stroke-width="1.300" fill="none"/><path d="M3.500 10H9" stroke="#101010" stroke-width="1"/></g><g transform="translate(0.8 59.45)"><circle cx="7" cy="7.500" r="7" fill="url(#lgM)"/><path d="M7.500 7.500V1A6.500 6.500 0 0 1 14 8.500H7.500Z" fill="#00e4ff"/><path d="M7.500 1.500V8.500H13.800" stroke="#006080" stroke-width="1.300" fill="none"/><path d="M3.500 10H9" stroke="#101010" stroke-width="1"/></g><g transform="translate(0.8 78.5)"><circle cx="7" cy="7.500" r="6.800" fill="url(#lgG)" stroke="#111" stroke-width=".8"/><path d="M7 1V14M0.500 8.500Q7 10.500 13.500 8.500M-1 8H1" stroke="#111" stroke-width=".9" fill="none"/></g><g transform="translate(0.8 97.55)"><circle cx="7" cy="7.500" r="6.800" fill="url(#lgG)" stroke="#111" stroke-width=".8"/><path d="M7 1V14M0.500 8.500Q7 10.500 13.500 8.500M-1 8H1" stroke="#111" stroke-width=".9" fill="none"/></g><g transform="translate(0.8 116.6)"><circle cx="7" cy="7.500" r="6.800" fill="url(#lgG)" stroke="#111" stroke-width=".8"/><path d="M7 2.500V9H13Q13 3 7 2.500Z" fill="#00c8f0"/><path d="M7 2V9H13.500M-1 8H1M3 11H9" stroke="#103040" stroke-width="1" fill="none"/></g><g transform="translate(0.8 135.65)"><circle cx="7" cy="7.500" r="7" fill="url(#lgR)"/><path d="M7 2.500L3 10H12Z" fill="#f4f000"/><path d="M7 2.500V7.500L3 10M7 7.500L12 10" stroke="#605000" stroke-width=".9" fill="none"/><path d="M-1 8H1.500" stroke="#111"/></g><g transform="translate(0.8 154.7)"><circle cx="7" cy="7.500" r="7" fill="url(#lgH)"/></g></svg>
<span style="position:absolute;left:1093px;top:484.5px;font-size:11.5px;line-height:14px;color:#fff;white-space:pre;letter-spacing:0.15px">Os+0</span>
<span style="position:absolute;left:1093px;top:503.5px;font-size:11.5px;line-height:14px;color:#fff;white-space:pre;letter-spacing:0.15px">P+5</span>
<span style="position:absolute;left:1093px;top:522.5px;font-size:11.5px;line-height:14px;color:#fff;white-space:pre;letter-spacing:0.15px">N-3</span>
<span style="position:absolute;left:1093px;top:542px;font-size:11.5px;line-height:14px;color:#fff;white-space:pre;letter-spacing:0.15px">I-1</span>
<span style="position:absolute;left:1093px;top:561px;font-size:11.5px;line-height:14px;color:#fff;white-space:pre;letter-spacing:0.15px">C+0</span>
<span style="position:absolute;left:1093px;top:580px;font-size:11.5px;line-height:14px;color:#fff;white-space:pre;letter-spacing:0.15px">C-1</span>
<span style="position:absolute;left:1093px;top:599px;font-size:11.5px;line-height:14px;color:#fff;white-space:pre;letter-spacing:0.15px">C+2</span>
<span style="position:absolute;left:1093px;top:618px;font-size:11.5px;line-height:14px;color:#fff;white-space:pre;letter-spacing:0.15px">O-2</span>
<span style="position:absolute;left:1093px;top:637px;font-size:11.5px;line-height:14px;color:#fff;white-space:pre;letter-spacing:0.15px">H+1</span>
</div>
<div style="position:absolute;left:764px;top:796px;width:8px;height:26px;background:#dde1ee"></div>
<div style="position:absolute;left:1019.5px;top:796px;width:7.5px;height:26px;background:#dde1ee"></div>
<svg style="position:absolute;left:776px;top:800px;overflow:visible" width="4" height="18"><g fill="#8e94a6"><rect x="0" y="0" width="1" height="1"/><rect x="2" y="0" width="1" height="1"/><rect x="1" y="2" width="1" height="1"/><rect x="3" y="2" width="1" height="1"/><rect x="0" y="4" width="1" height="1"/><rect x="2" y="4" width="1" height="1"/><rect x="1" y="6" width="1" height="1"/><rect x="3" y="6" width="1" height="1"/><rect x="0" y="8" width="1" height="1"/><rect x="2" y="8" width="1" height="1"/><rect x="1" y="10" width="1" height="1"/><rect x="3" y="10" width="1" height="1"/><rect x="0" y="12" width="1" height="1"/><rect x="2" y="12" width="1" height="1"/><rect x="1" y="14" width="1" height="1"/><rect x="3" y="14" width="1" height="1"/><rect x="0" y="16" width="1" height="1"/><rect x="2" y="16" width="1" height="1"/></g></svg>
<svg style="position:absolute;left:1031.5px;top:800px;overflow:visible" width="4" height="18"><g fill="#8e94a6"><rect x="0" y="0" width="1" height="1"/><rect x="2" y="0" width="1" height="1"/><rect x="1" y="2" width="1" height="1"/><rect x="3" y="2" width="1" height="1"/><rect x="0" y="4" width="1" height="1"/><rect x="2" y="4" width="1" height="1"/><rect x="1" y="6" width="1" height="1"/><rect x="3" y="6" width="1" height="1"/><rect x="0" y="8" width="1" height="1"/><rect x="2" y="8" width="1" height="1"/><rect x="1" y="10" width="1" height="1"/><rect x="3" y="10" width="1" height="1"/><rect x="0" y="12" width="1" height="1"/><rect x="2" y="12" width="1" height="1"/><rect x="1" y="14" width="1" height="1"/><rect x="3" y="14" width="1" height="1"/><rect x="0" y="16" width="1" height="1"/><rect x="2" y="16" width="1" height="1"/></g></svg>
<svg style="position:absolute;left:616px;top:802px;overflow:visible" width="18" height="16"><circle cx="3.500" cy="11.400" r="3" fill="#dcdcdc" stroke="#000" stroke-width="1.200"/><text x="5.800" y="7.500" font-family="Liberation Sans" font-weight="bold" font-size="9.5">Fe</text></svg>
<div style="position:absolute;left:637px;top:799px;width:1px;height:21px;background:#8a90a4"></div>
<svg style="position:absolute;left:643.5px;top:802px;overflow:visible" width="17" height="15"><rect x=".5" y=".5" width="16" height="14" fill="#fff" stroke="#1828d8" stroke-width="1.300"/><path d="M8.500 2V13M3 7.500H14M8.500 1.500L6 4.500H11ZM8.500 13.500L6 10.500H11ZM2 7.500L5 5V10ZM15 7.500L12 5V10Z" fill="#000" stroke="#000" stroke-width=".8"/><circle cx="8.500" cy="7.500" r="1.800" fill="#f0e000"/></svg>
<div style="position:absolute;left:665px;top:807px;border:3.500px solid transparent;border-top:3.500px solid #333;border-bottom:none"></div>
<div style="position:absolute;left:676px;top:799px;width:1px;height:21px;background:#8a90a4"></div>
<span style="position:absolute;left:683.500px;top:800px;font-family:'Liberation Serif',serif;font-weight:bold;font-style:italic;font-size:15px;line-height:18px;color:#102090">M</span>
<svg style="position:absolute;left:706px;top:803px;overflow:visible" width="15" height="14"><rect x=".5" y=".5" width="14" height="13" fill="#fff" stroke="#1030c0" stroke-width="1.300"/><circle cx="6" cy="6" r="3.300" fill="none" stroke="#e02020" stroke-width="1.200"/><circle cx="8.500" cy="8" r="3.500" fill="#20a090"/></svg>
<div style="position:absolute;left:726px;top:799px;width:1px;height:21px;background:#8a90a4"></div>
<svg style="position:absolute;left:733px;top:802px;overflow:visible" width="16" height="16"><path d="M4.500 0V15.500M11.500 0V15.500M0 4.500H16M0 11.500H16" stroke="#808080" stroke-width="1.300"/></svg>
<div style="position:absolute;left:753.5px;top:813px;border:3.500px solid transparent;border-top:3.500px solid #555;border-bottom:none"></div>
<div style="position:absolute;left:787px;top:798.5px;width:22px;height:21.5px;background:#fdf3c0;border:1px solid #e5c365"></div>
<svg style="position:absolute;left:792px;top:801px;overflow:visible" width="12" height="17"><path d="M1 0.500V13L4 10L6.500 15.500L8.500 14.500L6 9H10.500Z" fill="#fff" stroke="#000" stroke-width="1.100"/></svg>
<svg style="position:absolute;left:812.5px;top:801px;overflow:visible" width="16" height="16"><path d="M8 2V14M2 8H14" stroke="#000" stroke-width="1.800"/><path d="M8 0L5 4H11ZM8 16L5 12H11ZM0 8L4 5V11ZM16 8L12 5V11Z" fill="#000"/><circle cx="8" cy="8" r="2.800" fill="#fff" stroke="#000" stroke-width="1.500"/></svg>
<svg style="position:absolute;left:835px;top:801px;overflow:visible" width="14" height="16"><path d="M9.500 4A5 5 0 1 0 12 9" fill="none" stroke="#000" stroke-width="2"/><path d="M7 0.500L11.500 4.500L6.500 7Z" fill="#000"/></svg>
<svg style="position:absolute;left:856px;top:801px;overflow:visible" width="16" height="16"><path d="M8 2V14M2 8H14" stroke="#000" stroke-width="2.200"/><path d="M8 0L5 4H11ZM8 16L5 12H11ZM0 8L4 5V11ZM16 8L12 5V11Z" fill="#000"/></svg>
<svg style="position:absolute;left:878.5px;top:802px;overflow:visible" width="14" height="14"><path d="M0.500 4V0.500H4M10 0.500H13.500V4M13.500 10V13.500H10M4 13.500H0.500V10" fill="none" stroke="#000" stroke-width="1.300"/><path d="M3 3L11 11M11 3L3 11" stroke="#000" stroke-width="1.600"/><rect x="5" y="5" width="4" height="4" fill="#fff" stroke="#000"/></svg>
<svg style="position:absolute;left:900px;top:803px;overflow:visible" width="15" height="13"><path d="M14 1L1.500 7L14 11.500" fill="none" stroke="#000" stroke-width="1.800"/><path d="M9 3.500V9.500" stroke="#000" stroke-width="1" stroke-dasharray="1.500 1.500"/></svg>
<svg style="position:absolute;left:923px;top:802px;overflow:visible" width="14" height="15"><path d="M7 1L3 6H5.500L1.500 11H12.500L8.500 6H11Z" fill="none" stroke="#000" stroke-width="1.300"/><path d="M5 11V14H9V11M2 14H12" stroke="#000" stroke-width="1.300" fill="none"/></svg>
<svg style="position:absolute;left:945px;top:802px;overflow:visible" width="14" height="15"><circle cx="7" cy="7" r="5.500" fill="none" stroke="#000" stroke-width="1.500" stroke-dasharray="2 1.500"/><circle cx="7" cy="7" r="2.500" fill="#fff" stroke="#000" stroke-width="1.200"/><path d="M3 14H5M9 14H11" stroke="#000" stroke-width="1.500"/></svg>
<svg style="position:absolute;left:965.5px;top:801px;overflow:visible" width="15" height="16"><path d="M1 2H7V8H4V11H1" fill="none" stroke="#000" stroke-width="1.800" stroke-dasharray="3 1"/><circle cx="4" cy="5" r="2" fill="#000"/><rect x="8.500" y="6" width="2" height="9" fill="#ddd" stroke="#aaa" stroke-width=".6"/><rect x="11.500" y="6" width="2" height="9" fill="#ddd" stroke="#aaa" stroke-width=".6"/></svg>
<svg style="position:absolute;left:988px;top:801px;overflow:visible" width="16" height="16"><path d="M1 2H7V8H4V11H1" fill="none" stroke="#000" stroke-width="1.800" stroke-dasharray="3 1"/><circle cx="4" cy="5" r="2" fill="#000"/><rect x="8" y="7" width="7" height="7" fill="#888" stroke="#666" stroke-width=".6"/></svg>
<div style="position:absolute;left:1008.5px;top:813px;border:3.500px solid transparent;border-top:3.500px solid #555;border-bottom:none"></div>
<svg style="position:absolute;left:1045.5px;top:801px;overflow:visible" width="15" height="15"><path d="M1 1V13.500H14M4.500 5V13.500M7.500 5V13.500M10.500 5V13.500M13.500 5V13.500" fill="none" stroke="#000" stroke-width="1.100"/></svg>
<svg style="position:absolute;left:1068px;top:801px;overflow:visible" width="14" height="15"><path d="M7 1.500L1 13.500H13Z" fill="none" stroke="#000" stroke-width="1.100"/></svg>
<svg style="position:absolute;left:1089.5px;top:801px;overflow:visible" width="15" height="16"><circle cx="4.500" cy="11" r="3.500" fill="none" stroke="#000" stroke-width="1.300"/><path d="M4.500 7.500V1M4.500 7.500L12 2" stroke="#000" stroke-width="2"/><path d="M5 2H10" stroke="#000" stroke-width="1"/></svg>
<svg style="position:absolute;left:1112px;top:802px;overflow:visible" width="16" height="14"><path d="M1 12.500L2 5L10 1L9 8Z" fill="#fff" stroke="#000" stroke-width="1.300"/><path d="M1 12.500L12 9.500L15 4.500L10 2" fill="none" stroke="#000" stroke-width="1.300"/><path d="M10 1.500Q14 2 14.500 4" stroke="#000" stroke-dasharray="1.500 1.500" fill="none"/></svg>
<div style="position:absolute;left:1131px;top:813px;border:3.500px solid transparent;border-top:3.500px solid #555;border-bottom:none"></div>
<div class="abs" style="left:0;top:840px;width:616px;height:2px;background:#0b3a66"></div>
<div id="dlg" class="abs">
<div style="position:absolute;left:0px;top:0px;width:613px;height:25px;background:#fff"></div>
<span style="position:absolute;left:1px;top:5px;font-size:12px;line-height:14px;color:#000;white-space:nowrap;letter-spacing:-0.11px;letter-spacing:-0.15px">Atom Group and Site Designs</span>
<svg style="position:absolute;left:593px;top:6px" width="12" height="12" viewBox="0 0 12 12"><path d="M1 1L11 11M11 1L1 11" stroke="#000" stroke-width="1.1" fill="none"/></svg>
<div style="position:absolute;left:205px;top:53px;width:401px;height:271px;background:#fff;border:1px solid #dcdcdc"></div>
<div style="position:absolute;left:298px;top:36px;width:86px;height:18px;background:#f0f0f0;border:1px solid #d9d9d9;border-bottom:none"></div>
<div style="position:absolute;left:383px;top:36px;width:60px;height:18px;background:#f0f0f0;border:1px solid #d9d9d9;border-bottom:none"></div>
<div style="position:absolute;left:205px;top:34px;width:94px;height:20px;background:#fff;border:1px solid #d9d9d9;border-bottom:none"></div>
<span style="position:absolute;left:212px;top:36.5px;font-size:11px;line-height:13px;color:#000;white-space:nowrap;letter-spacing:-0.11px;letter-spacing:-0.155px;">Style and Colors</span>
<span style="position:absolute;left:302.9px;top:38.5px;font-size:11px;line-height:13px;color:#000;white-space:nowrap;letter-spacing:-0.11px;letter-spacing:-0.38px;">Model and Radii</span>
<span style="position:absolute;left:389.8px;top:38.5px;font-size:11px;line-height:13px;color:#000;white-space:nowrap;letter-spacing:-0.11px;letter-spacing:-0.33px;">Mixed Site</span>
<span style="position:absolute;left:9px;top:55.5px;font-size:11px;line-height:13px;color:#000;white-space:nowrap;letter-spacing:-0.11px;letter-spacing:-0.14px;">Atom groups and sites:</span>
<div style="position:absolute;left:9px;top:71px;width:179px;height:137px;background:#fff;border:1px solid #828790;overflow:hidden"><div style="position:absolute;left:6px;top:-0.5px;width:0;height:16px;border-left:1px dotted #a0a0a0"></div><div style="position:absolute;left:10px;top:7.5px;width:8px;height:0;border-top:1px dotted #a0a0a0"></div><div style="position:absolute;left:2px;top:3.5px;width:9px;height:9px;border:1px solid #919191;background:#fff"><div style="position:absolute;left:1px;top:3px;width:5px;height:1px;background:#2c4b8c"></div><div style="position:absolute;left:3px;top:1px;width:1px;height:5px;background:#2c4b8c"></div></div><span style="position:absolute;left:24.4px;top:1.5px;font-size:11px;line-height:13px;color:#000;white-space:nowrap">Os+0</span><div style="position:absolute;left:6px;top:15.5px;width:0;height:16px;border-left:1px dotted #a0a0a0"></div><div style="position:absolute;left:10px;top:23.5px;width:8px;height:0;border-top:1px dotted #a0a0a0"></div><div style="position:absolute;left:2px;top:19.5px;width:9px;height:9px;border:1px solid #919191;background:#fff"><div style="position:absolute;left:1px;top:3px;width:5px;height:1px;background:#2c4b8c"></div><div style="position:absolute;left:3px;top:1px;width:1px;height:5px;background:#2c4b8c"></div></div><span style="position:absolute;left:24.4px;top:17.5px;font-size:11px;line-height:13px;color:#000;white-space:nowrap">P+5</span><div style="position:absolute;left:6px;top:31.5px;width:0;height:16px;border-left:1px dotted #a0a0a0"></div><div style="position:absolute;left:10px;top:39.5px;width:8px;height:0;border-top:1px dotted #a0a0a0"></div><div style="position:absolute;left:2px;top:35.5px;width:9px;height:9px;border:1px solid #919191;background:#fff"><div style="position:absolute;left:1px;top:3px;width:5px;height:1px;background:#2c4b8c"></div><div style="position:absolute;left:3px;top:1px;width:1px;height:5px;background:#2c4b8c"></div></div><span style="position:absolute;left:24.4px;top:33.5px;font-size:11px;line-height:13px;color:#000;white-space:nowrap">N-3</span><div style="position:absolute;left:6px;top:47.5px;width:0;height:16px;border-left:1px dotted #a0a0a0"></div><div style="position:absolute;left:10px;top:55.5px;width:8px;height:0;border-top:1px dotted #a0a0a0"></div><div style="position:absolute;left:2px;top:51.5px;width:9px;height:9px;border:1px solid #919191;background:#fff"><div style="position:absolute;left:1px;top:3px;width:5px;height:1px;background:#2c4b8c"></div><div style="position:absolute;left:3px;top:1px;width:1px;height:5px;background:#2c4b8c"></div></div><span style="position:absolute;left:24.4px;top:49.5px;font-size:11px;line-height:13px;color:#000;white-space:nowrap">I-1</span><div style="position:absolute;left:6px;top:63.5px;width:0;height:16px;border-left:1px dotted #a0a0a0"></div><div style="position:absolute;left:10px;top:71.5px;width:8px;height:0;border-top:1px dotted #a0a0a0"></div><div style="position:absolute;left:2px;top:67.5px;width:9px;height:9px;border:1px solid #919191;background:#fff"><div style="position:absolute;left:1px;top:3px;width:5px;height:1px;background:#2c4b8c"></div><div style="position:absolute;left:3px;top:1px;width:1px;height:5px;background:#2c4b8c"></div></div><span style="position:absolute;left:24.4px;top:65.5px;font-size:11px;line-height:13px;color:#000;white-space:nowrap">C+0</span><div style="position:absolute;left:6px;top:79.5px;width:0;height:16px;border-left:1px dotted #a0a0a0"></div><div style="position:absolute;left:10px;top:87.5px;width:8px;height:0;border-top:1px dotted #a0a0a0"></div><div style="position:absolute;left:2px;top:83.5px;width:9px;height:9px;border:1px solid #919191;background:#fff"><div style="position:absolute;left:1px;top:3px;width:5px;height:1px;background:#2c4b8c"></div><div style="position:absolute;left:3px;top:1px;width:1px;height:5px;background:#2c4b8c"></div></div><span style="position:absolute;left:24.4px;top:81.5px;font-size:11px;line-height:13px;color:#000;white-space:nowrap">C-1</span><div style="position:absolute;left:6px;top:95.5px;width:0;height:16px;border-left:1px dotted #a0a0a0"></div><div style="position:absolute;left:10px;top:103.5px;width:8px;height:0;border-top:1px dotted #a0a0a0"></div><div style="position:absolute;left:2px;top:99.5px;width:9px;height:9px;border:1px solid #919191;background:#fff"><div style="position:absolute;left:1px;top:3px;width:5px;height:1px;background:#2c4b8c"></div><div style="position:absolute;left:3px;top:1px;width:1px;height:5px;background:#2c4b8c"></div></div><div style="position:absolute;left:22px;top:96px;width:25px;height:16px;background:#0078d7;outline:1px dotted #e0a060;outline-offset:-1px"></div><span style="position:absolute;left:24.4px;top:97.5px;font-size:11px;line-height:13px;color:#fff;white-space:nowrap">C+2</span><div style="position:absolute;left:6px;top:111.5px;width:0;height:16px;border-left:1px dotted #a0a0a0"></div><div style="position:absolute;left:10px;top:119.5px;width:8px;height:0;border-top:1px dotted #a0a0a0"></div><div style="position:absolute;left:2px;top:115.5px;width:9px;height:9px;border:1px solid #919191;background:#fff"><div style="position:absolute;left:1px;top:3px;width:5px;height:1px;background:#2c4b8c"></div><div style="position:absolute;left:3px;top:1px;width:1px;height:5px;background:#2c4b8c"></div></div><span style="position:absolute;left:24.4px;top:113.5px;font-size:11px;line-height:13px;color:#000;white-space:nowrap">O-2</span><div style="position:absolute;left:6px;top:127.5px;width:0;height:16px;border-left:1px dotted #a0a0a0"></div><div style="position:absolute;left:10px;top:135.5px;width:8px;height:0;border-top:1px dotted #a0a0a0"></div><div style="position:absolute;left:2px;top:131.5px;width:9px;height:9px;border:1px solid #919191;background:#fff"><div style="position:absolute;left:1px;top:3px;width:5px;height:1px;background:#2c4b8c"></div><div style="position:absolute;left:3px;top:1px;width:1px;height:5px;background:#2c4b8c"></div></div><span style="position:absolute;left:24.4px;top:129.5px;font-size:11px;line-height:13px;color:#000;white-space:nowrap">H+1</span><div style="position:absolute;left:161px;top:0;width:17px;height:136px;background:#f0f0f0"></div><div style="position:absolute;left:162px;top:17px;width:15px;height:90px;background:#cdcdcd"></div><svg style="position:absolute;left:161px;top:0" width="17" height="136"><path d="M5 11L8.5 7.5L12 11" stroke="#404040" stroke-width="1.4" fill="none"/><path d="M5 124L8.5 127.5L12 124" stroke="#404040" stroke-width="1.4" fill="none"/></svg></div>
<div style="position:absolute;left:9px;top:224px;width:13px;height:13px;background:#fff;border:1px solid #333"><svg width="11" height="11" style="position:absolute;left:0;top:0"><path d="M1.5 5.5L4.5 8.5L10 2.5" stroke="#222" stroke-width="1.2" fill="none"/></svg></div>
<span style="position:absolute;left:24.5px;top:225px;font-size:11px;line-height:13px;color:#000;white-space:nowrap;letter-spacing:-0.11px;">Update atoms in picture</span>
<div style="position:absolute;left:9px;top:244px;width:13px;height:13px;background:#fff;border:1px solid #333"></div>
<span style="position:absolute;left:24.5px;top:245px;font-size:11px;line-height:13px;color:#000;white-space:nowrap;letter-spacing:-0.11px;letter-spacing:-0.18px;">Update invisible atoms</span>
<div style="position:absolute;left:9px;top:264px;width:13px;height:13px;background:#fff;border:1px solid #333"><svg width="11" height="11" style="position:absolute;left:0;top:0"><path d="M1.5 5.5L4.5 8.5L10 2.5" stroke="#222" stroke-width="1.2" fill="none"/></svg></div>
<span style="position:absolute;left:24.5px;top:265px;font-size:11px;line-height:13px;color:#000;white-space:nowrap;letter-spacing:-0.11px;letter-spacing:-0.07px;">Save to Registry</span>
<div style="position:absolute;left:10px;top:332px;width:177px;height:21px;background:#e1e1e1;border:1px solid #adadad"></div>
<span style="position:absolute;left:59.6px;top:337px;font-size:11px;line-height:13px;color:#000;white-space:nowrap;letter-spacing:-0.11px;">Set or Reset</span>
<div style="position:absolute;left:172px;top:341px;border:4px solid transparent;border-top:4px solid #000;border-bottom:none"></div>
<div style="position:absolute;left:252px;top:332px;width:73px;height:21px;background:#e1e1e1;border:2px solid #0078d7"></div>
<span style="position:absolute;left:280.7px;top:336.5px;font-size:11px;line-height:13px;color:#000;white-space:nowrap;letter-spacing:-0.11px;">OK</span>
<div style="position:absolute;left:333px;top:332px;width:74px;height:21px;background:#e1e1e1;border:1px solid #adadad"></div>
<span style="position:absolute;left:352px;top:336.5px;font-size:11px;line-height:13px;color:#000;white-space:nowrap;letter-spacing:-0.11px;letter-spacing:-0.37px;">Cancel</span>
<span style="position:absolute;left:223.6px;top:70.5px;font-size:11px;line-height:13px;color:#000;white-space:nowrap;letter-spacing:-0.11px;">Style:</span>
<div style="position:absolute;left:257px;top:66px;width:246px;height:21px;background:#e1e1e1;border:1px solid #adadad"></div>
<span style="position:absolute;left:260.7px;top:70.5px;font-size:11px;line-height:13px;color:#000;white-space:nowrap;letter-spacing:-0.11px;">Octant</span>
<svg style="position:absolute;left:487px;top:73px" width="12" height="8"><path d="M1.5 1.5L6 6L10.5 1.5" stroke="#404040" stroke-width="1.1" fill="none"/></svg>
<div style="position:absolute;left:520px;top:60px;width:63px;height:55px;background:#000040;border:1px solid #5a5a6a"><svg width="61" height="53" viewBox="0 0 61 53" style="position:absolute;left:0;top:0"><defs><radialGradient id="pg" cx=".5" cy=".5" r=".55" fx=".53" fy=".8"><stop offset="0" stop-color="#ececec"/><stop offset=".45" stop-color="#cfcfcf"/><stop offset=".8" stop-color="#a0a0a0"/><stop offset="1" stop-color="#5c5c5c"/></radialGradient></defs>
<circle cx="30.3" cy="26.5" r="25.8" fill="url(#pg)"/>
<path d="M30.3 1.8 L30.6 26.5 L17.6 34.1 Q14.3 17.6 30.3 1.8Z" fill="#0090b8" stroke="#101010" stroke-width=".9" stroke-linejoin="round"/>
<path d="M30.3 1.8 Q52.4 9 53.7 30.3 L30.6 26.5Z" fill="#00d0ff" stroke="#101010" stroke-width=".9" stroke-linejoin="round"/>
<path d="M30.6 26.5 L53.7 30.3 Q36 38.4 17.6 34.1Z" fill="#007090" stroke="#101010" stroke-width=".9" stroke-linejoin="round"/>
<path d="M4.5 27.5 Q10 32.500 17.6 34.1 Q18 45 25 51.500 M53.700 30.300 Q54 40 50 46 M30.300 1.800 Q34 0.800 38 2" fill="none" stroke="#101010" stroke-width=".9"/>
</svg></div>
<div style="position:absolute;left:258px;top:93px;width:94px;height:21px;background:#e1e1e1;border:1px solid #adadad"></div>
<span style="position:absolute;left:265.5px;top:97.5px;font-size:11px;line-height:13px;color:#000;white-space:nowrap;letter-spacing:-0.11px;letter-spacing:-0.05px;">More Settings...</span>
<span style="position:absolute;left:213.8px;top:115.5px;font-size:11px;line-height:13px;color:#000;white-space:nowrap;letter-spacing:-0.11px;">Fill</span>
<div style="position:absolute;left:233.5px;top:121.5px;width:354.5px;height:1px;background:#a0a0a0"></div>
<span style="position:absolute;left:213.8px;top:193.5px;font-size:11px;line-height:13px;color:#000;white-space:nowrap;letter-spacing:-0.11px;">Border</span>
<div style="position:absolute;left:251px;top:199.5px;width:336px;height:1px;background:#a0a0a0"></div>
<span style="position:absolute;left:213.8px;top:271.5px;font-size:11px;line-height:13px;color:#000;white-space:nowrap;letter-spacing:-0.11px;letter-spacing:-0.17px;">Inner lines</span>
<div style="position:absolute;left:269px;top:277.8px;width:318px;height:1px;background:#a0a0a0"></div>
<span style="position:absolute;left:223.6px;top:135.5px;font-size:11px;line-height:13px;color:#000;white-space:nowrap;letter-spacing:-0.11px;">Color:</span>
<div style="position:absolute;left:258px;top:131.5px;width:94px;height:21px;background:#e1e1e1;border:1px solid #adadad"></div>
<div style="position:absolute;left:261px;top:134.5px;width:72px;height:15px;background:#c0c0c0;border:1px solid #6a6a6a"></div>
<div style="position:absolute;left:339px;top:140.5px;border:3.5px solid transparent;border-top:4px solid #000;border-bottom:none"></div>
<span style="position:absolute;left:365.5px;top:135.5px;font-size:11px;line-height:13px;color:#000;white-space:nowrap;letter-spacing:-0.11px;letter-spacing:-0.32px;">Transparency:</span>
<div style="position:absolute;left:443px;top:131px;width:60px;height:22px;background:#fff;border:1px solid #7a7a7a"></div>
<div style="position:absolute;left:486px;top:133px;width:15px;height:9px;background:#f0f0f0;border:1px solid #adadad"><div style="position:absolute;left:3.5px;top:2px;border:3px solid transparent;border-bottom:3.5px solid #000;border-top:none"></div></div>
<div style="position:absolute;left:486px;top:142px;width:15px;height:9px;background:#f0f0f0;border:1px solid #adadad"><div style="position:absolute;left:3.5px;top:2px;border:3px solid transparent;border-top:3.5px solid #000;border-bottom:none"></div></div>
<span style="position:absolute;left:448.4px;top:134.5px;font-size:11px;line-height:13px;color:#000;white-space:nowrap;letter-spacing:-0.11px;">0</span>
<div style="position:absolute;left:515px;top:132px;width:74px;height:21px;background:#e1e1e1;border:1px solid #adadad"></div>
<span style="position:absolute;left:526.2px;top:135.5px;font-size:11px;line-height:13px;color:#000;white-space:nowrap;letter-spacing:-0.11px;letter-spacing:0.19px;">Material...</span>
<div style="position:absolute;left:366px;top:163px;width:136px;height:21px;background:#e1e1e1;border:1px solid #adadad"></div>
<span style="position:absolute;left:373.5px;top:167.5px;font-size:11px;line-height:13px;color:#000;white-space:nowrap;letter-spacing:-0.11px;letter-spacing:0.15px;">Set Opacity to S.O.F. ...</span>
<span style="position:absolute;left:223.6px;top:213px;font-size:11px;line-height:13px;color:#000;white-space:nowrap;letter-spacing:-0.11px;">Color:</span>
<div style="position:absolute;left:258px;top:209.5px;width:94px;height:21px;background:#e1e1e1;border:1px solid #adadad"></div>
<div style="position:absolute;left:261px;top:212.5px;width:72px;height:15px;background:#000;border:1px solid #6a6a6a"></div>
<div style="position:absolute;left:339px;top:218.5px;border:3.5px solid transparent;border-top:4px solid #000;border-bottom:none"></div>
<span style="position:absolute;left:365.5px;top:213px;font-size:11px;line-height:13px;color:#000;white-space:nowrap;letter-spacing:-0.11px;letter-spacing:0px;">Dashed/dotted:</span>
<div style="position:absolute;left:443px;top:209.5px;width:149px;height:21px;background:#e1e1e1;border:1px solid #adadad"></div>
<span style="position:absolute;left:446.2px;top:213px;font-size:11px;line-height:13px;color:#000;white-space:nowrap;letter-spacing:-0.11px;">Solid</span>
<svg style="position:absolute;left:576px;top:217px" width="12" height="8"><path d="M1.5 1.5L6 6L10.5 1.5" stroke="#404040" stroke-width="1.1" fill="none"/></svg>
<span style="position:absolute;left:223.6px;top:242.5px;font-size:11px;line-height:13px;color:#000;white-space:nowrap;letter-spacing:-0.11px;letter-spacing:0px;">Weight [mm]:</span>
<div style="position:absolute;left:293px;top:239px;width:60px;height:22px;background:#fff;border:1px solid #7a7a7a"></div>
<div style="position:absolute;left:336px;top:241px;width:15px;height:9px;background:#f0f0f0;border:1px solid #adadad"><div style="position:absolute;left:3.5px;top:2px;border:3px solid transparent;border-bottom:3.5px solid #000;border-top:none"></div></div>
<div style="position:absolute;left:336px;top:250px;width:15px;height:9px;background:#f0f0f0;border:1px solid #adadad"><div style="position:absolute;left:3.5px;top:2px;border:3px solid transparent;border-top:3.5px solid #000;border-bottom:none"></div></div>
<span style="position:absolute;left:298.9px;top:242.5px;font-size:11px;line-height:13px;color:#000;white-space:nowrap;letter-spacing:-0.11px;">0.05</span>
<span style="position:absolute;left:223.6px;top:291px;font-size:11px;line-height:13px;color:#000;white-space:nowrap;letter-spacing:-0.11px;">Color:</span>
<div style="position:absolute;left:258px;top:288px;width:94px;height:21px;background:#e1e1e1;border:1px solid #adadad"></div>
<div style="position:absolute;left:261px;top:291px;width:72px;height:15px;background:#000;border:1px solid #6a6a6a"></div>
<div style="position:absolute;left:339px;top:297px;border:3.5px solid transparent;border-top:4px solid #000;border-bottom:none"></div>
<span style="position:absolute;left:365.5px;top:291px;font-size:11px;line-height:13px;color:#000;white-space:nowrap;letter-spacing:-0.11px;letter-spacing:0px;">Weight [mm]:</span>
<div style="position:absolute;left:443px;top:287.5px;width:60px;height:22px;background:#fff;border:1px solid #7a7a7a"></div>
<div style="position:absolute;left:486px;top:289.5px;width:15px;height:9px;background:#f0f0f0;border:1px solid #adadad"><div style="position:absolute;left:3.5px;top:2px;border:3px solid transparent;border-bottom:3.5px solid #000;border-top:none"></div></div>
<div style="position:absolute;left:486px;top:298.5px;width:15px;height:9px;background:#f0f0f0;border:1px solid #adadad"><div style="position:absolute;left:3.5px;top:2px;border:3px solid transparent;border-top:3.5px solid #000;border-bottom:none"></div></div>
<span style="position:absolute;left:448.4px;top:291px;font-size:11px;line-height:13px;color:#000;white-space:nowrap;letter-spacing:-0.11px;">0.3</span>
</div>
</body></html>
